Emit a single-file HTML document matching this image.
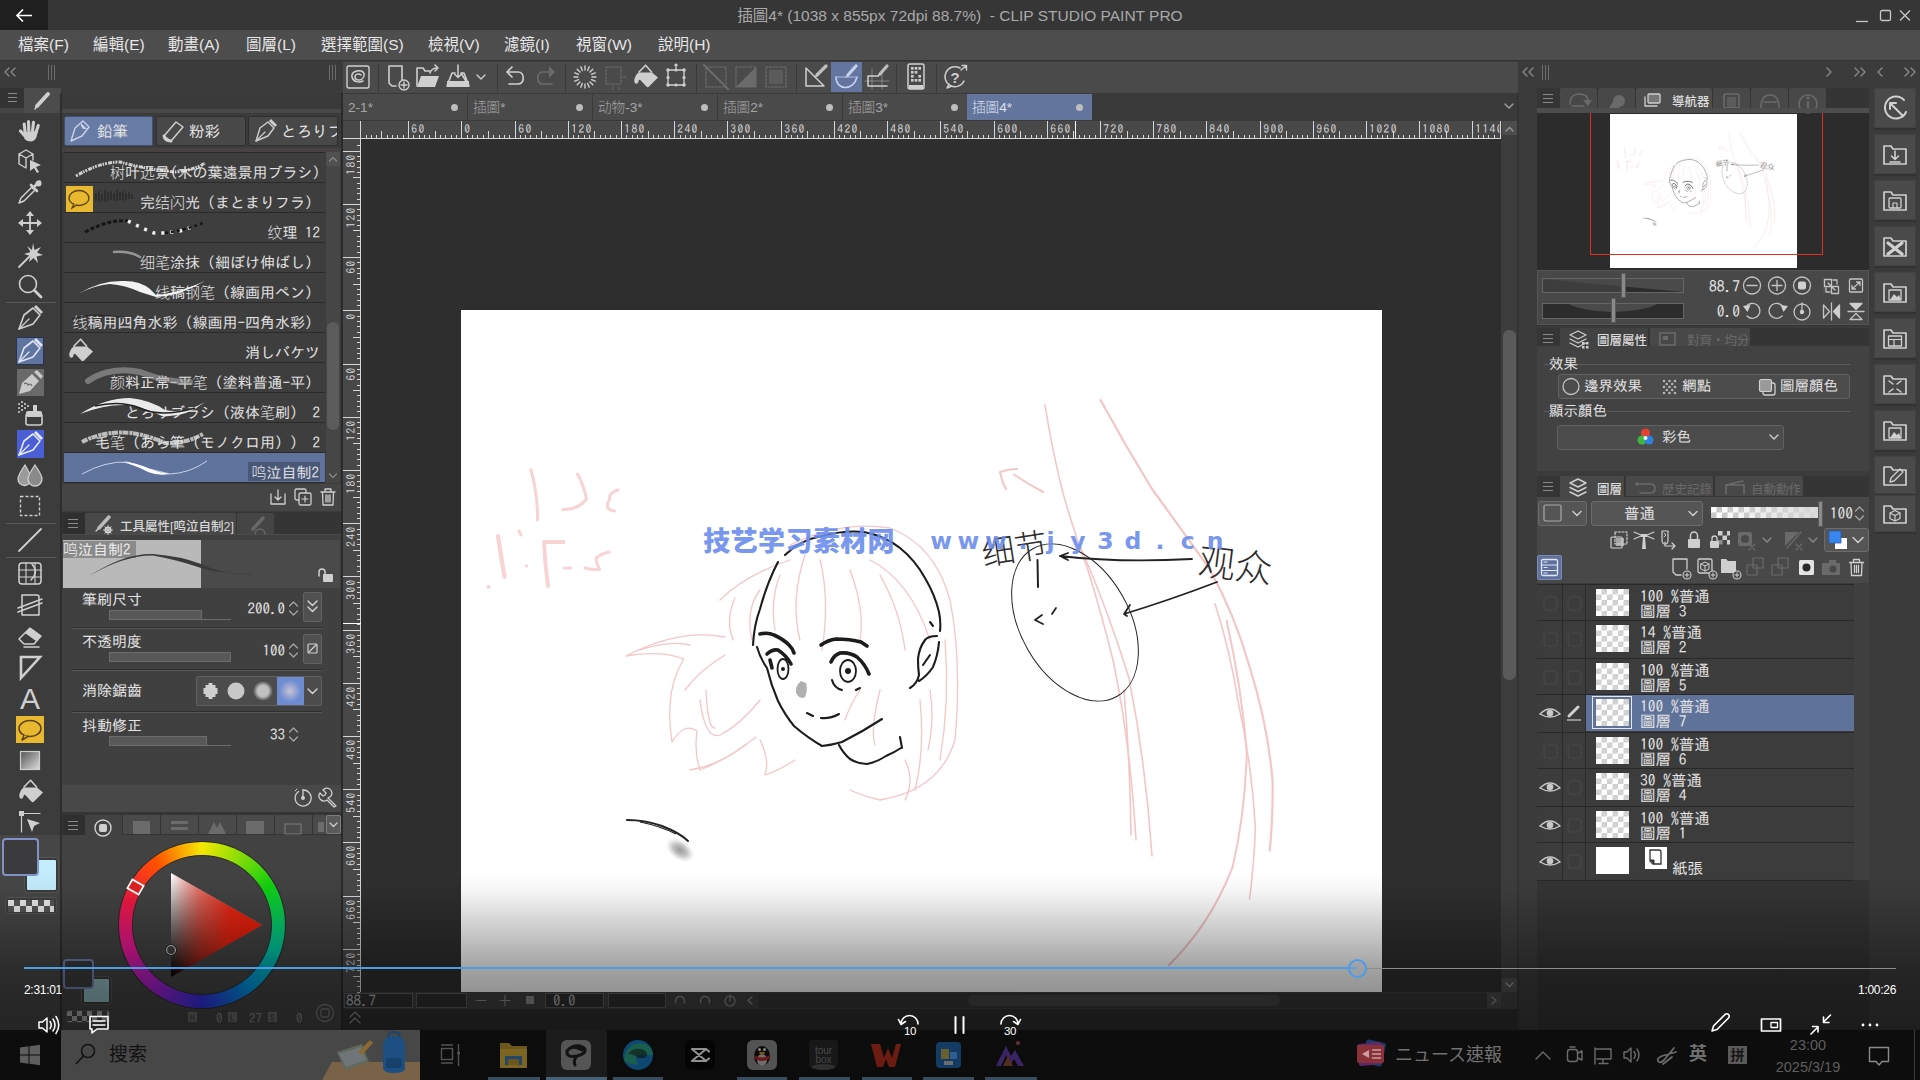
<!DOCTYPE html>
<html lang="zh-Hant">
<head>
<meta charset="utf-8">
<title>CLIP STUDIO PAINT PRO</title>
<style>
*{box-sizing:border-box;margin:0;padding:0}
html,body{width:1920px;height:1080px;overflow:hidden;background:#3c3c3c}
body{position:relative;font-family:"Liberation Sans","Noto Sans CJK TC","Noto Sans CJK SC",sans-serif;color:#d8d8d8;font-size:14px}
.a{position:absolute}
.g{font-family:"IPAGothic","Noto Sans CJK TC","Noto Sans CJK SC","Liberation Mono",monospace;font-weight:300}
svg{position:absolute;overflow:visible}
.ic{fill:none;stroke:#cfcfcf;stroke-width:1.6;stroke-linecap:round;stroke-linejoin:round}
.icf{fill:#cfcfcf;stroke:none}
.dim{opacity:.25}
/* ---- top ---- */
#title{left:0;top:0;width:1920px;height:30px;background:#363636}
#back{left:0;top:0;width:48px;height:31px;background:#1f1f1f}
#ttext{left:0;top:0;width:1920px;height:30px;line-height:31px;text-align:center;font-size:15.5px;color:#a9a9a9;white-space:pre}
#menu{left:0;top:30px;width:1920px;height:31px;background:#4d4d4d;border-bottom:1px solid #353535}
#menu span{position:absolute;top:0;line-height:30px;font-size:15.5px;color:#e6e6e6;white-space:nowrap}
#dockL{left:0;top:61px;width:342px;height:32px;background:#3b3b3b}
#cmd{left:343px;top:62px;width:1175px;height:31px;background:#4a4a4a}
#dockR{left:1518px;top:61px;width:402px;height:30px;background:#3b3b3b}
#tabbar{left:343px;top:93px;width:1175px;height:28px;background:#3a3a3a}
.tab{position:absolute;top:94px;height:26px;width:124px;background:#4a4a4a;color:#a6a6a6;font-size:13.6px;font-weight:300;line-height:27px;padding-left:5px}
.tab i{position:absolute;right:9.5px;top:9.5px;width:7px;height:7px;border-radius:50%;background:#bdbdbd}
.tab.sel{background:#63759d;color:#dfe3ee}
/* ---- canvas ---- */
#cv{left:361px;top:139px;width:1140px;height:853px;background:#2e2e2e}
#paper{left:461px;top:310px;width:921px;height:682px;background:#fff}
#rulh{left:343px;top:121px;width:1158px;height:18px;background:#484848}
#rulv{left:343px;top:139px;width:18px;height:853px;background:#484848}
#vsb{left:1501px;top:121px;width:17px;height:871px;background:#3d3d3d}
#stat{left:343px;top:992px;width:1175px;height:17px;background:#404040}
#below{left:343px;top:1009px;width:1175px;height:21px;background:#2f2f2f}
</style>
</head>
<body>
<div class="a" id="title"></div>
<div class="a" id="back"></div>
<svg style="left:15px;top:8px" width="18" height="15" viewBox="0 0 18 15"><path d="M17 7.5H2.5M8 1.5L2 7.5L8 13.5" fill="none" stroke="#fff" stroke-width="1.7"/></svg>
<div class="a" id="ttext">插圖4* (1038 x 855px 72dpi 88.7%)  - CLIP STUDIO PAINT PRO</div>
<svg style="left:1856px;top:9px" width="50" height="14" viewBox="0 0 50 14"><path d="M0 12.5H12" stroke="#c8c8c8" stroke-width="1.3" fill="none"/><rect x="24.5" y="1.5" width="10" height="10" rx="1.5" fill="none" stroke="#c8c8c8" stroke-width="1.3"/><path d="M44 1.5L54 11.5M54 1.5L44 11.5" stroke="#c8c8c8" stroke-width="1.3" fill="none"/></svg>
<div class="a" id="menu">
<span style="left:18px">檔案(F)</span><span style="left:93px">編輯(E)</span><span style="left:168px">動畫(A)</span><span style="left:246px">圖層(L)</span><span style="left:321px">選擇範圍(S)</span><span style="left:428px">檢視(V)</span><span style="left:504px">濾鏡(I)</span><span style="left:576px">視窗(W)</span><span style="left:658px">說明(H)</span>
</div>
<div class="a" id="dockL"></div>
<div class="a" id="cmd"></div>
<div class="a" id="dockR"></div>
<div class="a" id="tabbar"></div>
<div class="tab" style="left:343px">2-1*<i></i></div>
<div class="tab" style="left:468px">插圖*<i></i></div>
<div class="tab" style="left:593px">动物-3*<i></i></div>
<div class="tab" style="left:718px">插圖2*<i></i></div>
<div class="tab" style="left:843px">插圖3*<i></i></div>
<div class="tab sel" style="left:967px;width:125px">插圖4*<i></i></div>
<svg style="left:1503px;top:102px" width="12" height="8" viewBox="0 0 12 8"><path d="M2 2L6 6L10 2" class="ic" style="stroke:#999"/></svg>
<svg style="left:343px;top:62px" width="1175" height="31" viewBox="343 62 1175 31">
<g stroke="#393939" stroke-width="1" shape-rendering="crispEdges"><path d="M378.5 64V92M497.5 64V92M565.5 64V92M696.5 64V92M796.5 64V92M896.5 64V92M936.5 64V92"/></g>
<rect x="831" y="62" width="31" height="30" fill="#6476a0"/>
<!-- clip studio swirl -->
<g transform="translate(358 77)"><rect x="-11" y="-11" width="22" height="22" rx="2" class="ic" style="stroke-width:1.4"/><path d="M3-2c-2-2-6-1-6 2s4 4 7 2s3-7-1-8s-10 1-9 6s7 6 11 4" class="ic" style="stroke-width:1.5"/></g>
<!-- new -->
<g transform="translate(398 77)"><path d="M-9-11H4V4M-9-11V6L-6 9H-2" class="ic"/><circle cx="6" cy="8" r="5" fill="#4a4a4a" class="ic" style="stroke-width:1.4;fill:#4a4a4a"/><path d="M3 8H9M6 5V11" class="ic" style="stroke-width:1.4"/></g>
<!-- open -->
<g transform="translate(428 77)"><path d="M-11 9V-9H-5L-3-6H2" class="ic"/><path d="M-11 10L-7-1H11L7 10Z" class="icf"/><path d="M2-4C3-8 6-9 10-9M7-12L10-9L7-6" class="ic" style="stroke-width:1.5"/></g>
<!-- save -->
<g transform="translate(458 77)"><path d="M-11 9L-6-4H-3M3-4H6L11 9Z" class="ic"/><rect x="-11" y="4" width="22" height="6" class="icf"/><path d="M0-12V0M-3.5-3L0 0.5L3.5-3" class="ic" style="stroke-width:1.5"/></g>
<path d="M477 75L481 79L485 75" class="ic" style="stroke-width:1.4"/>
<!-- undo -->
<g transform="translate(516 77)"><path d="M-8-5H2C9-5 9 7 2 7H-7" class="ic" style="stroke-width:1.7"/><path d="M-4-10L-9-5L-4 0" class="ic" style="stroke-width:1.7"/></g>
<!-- redo dim -->
<g transform="translate(545 77)" class="dim"><path d="M8-5H-2C-9-5-9 7-2 7H7" class="ic" style="stroke-width:1.7"/><path d="M4-11L10-5L4 1Z" class="icf"/></g>
<!-- loading -->
<g transform="translate(585 77)" stroke="#cfcfcf" stroke-width="1.4" stroke-linecap="round"><path d="M0-11V-7M0 11V7M-11 0H-7M11 0H7M-7.8-7.8L-5-5M7.8 7.8L5 5M-7.8 7.8L-5 5M7.8-7.8L5-5M-4.2-10.2L-2.7-6.5M4.2 10.2L2.7 6.5M4.2-10.2L2.7-6.5M-4.2 10.2L-2.7 6.5M-10.2-4.2L-6.5-2.7M10.2 4.2L6.5 2.7M-10.2 4.2L-6.5 2.7M10.2-4.2L6.5-2.7"/></g>
<g transform="translate(615 77)" class="dim"><rect x="-9" y="-10" width="15" height="17" class="ic" style="stroke-dasharray:2 1.5;stroke-width:1.2"/><path d="M8 0H11M-2 10V12M4 10V12" class="ic" style="stroke-width:1"/></g>
<!-- fill bucket -->
<defs><g id="bkt"><path d="M-6.500-4.500H7L13 .500L3.800 9.800Q2.600 10.800 1.400 9.600L-4.500 3.200Q-6 2-6.400 4Q-6.800 7.200-9 6.800Q-11.200 6.200-10.600 2Q-10-2-6.500-4.500Z" fill="#cfcfcf"/><path d="M-6.500-4.500L.600-11.800L7-4.500" fill="none" stroke="#cfcfcf" stroke-width="1.600" stroke-linejoin="round"/></g></defs><use href="#bkt" transform="translate(645 77)"/>
<!-- transform -->
<g transform="translate(676 77)"><rect x="-8" y="-7" width="16" height="15" class="ic" style="stroke-width:1.4"/><g class="icf"><circle cx="-8" cy="-7" r="1.8"/><circle cx="8" cy="-7" r="1.8"/><circle cx="-8" cy="8" r="1.8"/><circle cx="8" cy="8" r="1.8"/><circle cx="0" cy="8" r="1.6"/><circle cx="-8" cy="0.5" r="1.6"/><circle cx="8" cy="0.5" r="1.6"/><circle cx="0" cy="-7" r="1.6"/><circle cx="0" cy="-12" r="1.6"/></g><path d="M0-12V-7" class="ic" style="stroke-width:1.2"/></g>
<!-- dim three -->
<g transform="translate(716 77)" class="dim"><rect x="-10" y="-10" width="20" height="20" class="ic" style="stroke-dasharray:2 1.5;stroke-width:1.2"/><path d="M-12-12L12 12" class="ic" style="stroke-width:2"/></g>
<g transform="translate(746 77)" class="dim"><rect x="-10" y="-10" width="20" height="20" class="ic" style="stroke-dasharray:2 1.5;stroke-width:1.2"/><path d="M10-10V10H-10Z" class="icf"/></g>
<g transform="translate(776 77)" class="dim"><rect x="-10" y="-10" width="20" height="20" class="ic" style="stroke-dasharray:2 1.5;stroke-width:1.2"/><rect x="-7" y="-7" width="14" height="14" class="icf" opacity=".5"/></g>
<!-- ruler snap icons -->
<g transform="translate(815 77)"><path d="M-9-9V9H9Z" class="ic" style="stroke-width:1.5"/><path d="M2-2L11-11" class="ic" style="stroke-width:3.2;stroke:#bdbdbd"/><path d="M0 0L2-2" class="ic" style="stroke-width:1.2"/></g>
<g transform="translate(846 77)"><path d="M-10 0C-10 14 8 14 11 0" class="ic" style="stroke:#c7d3f5;stroke-width:1.5"/><path d="M-10 0H11" class="ic" style="stroke:#aebbe0;stroke-width:1"/><path d="M2-2L10-11" class="ic" style="stroke-width:3.2;stroke:#c7d0ea"/><path d="M0 0L2-2" class="ic" style="stroke-width:1.2;stroke:#c7d0ea"/></g>
<g transform="translate(877 77)"><path d="M-9-1V9H10M-9-1H1" class="ic" style="stroke-width:1.5"/><path d="M-12 4H12M5-6V12M-5-8V12" class="ic" style="stroke-width:.7;opacity:.6"/><path d="M3-3L10-11" class="ic" style="stroke-width:3.2;stroke:#bdbdbd"/><path d="M1-1L3-3" class="ic" style="stroke-width:1.2"/></g>
<!-- phone -->
<g transform="translate(916 77)"><rect x="-8" y="-13" width="16" height="25" rx="2" class="ic" style="stroke-width:1.5"/><rect x="-7" y="8" width="14" height="4" class="icf"/><g class="icf"><rect x="-5" y="-10" width="2.6" height="2.6"/><rect x="-1.3" y="-10" width="2.6" height="2.6"/><rect x="2.4" y="-10" width="2.6" height="2.6"/><rect x="-5" y="-6" width="2.6" height="2.6"/><rect x="-1.3" y="-6" width="2.6" height="2.6"/><rect x="-5" y="-2" width="2.6" height="2.6"/><rect x="2.4" y="-2" width="2.6" height="2.6"/><rect x="-5" y="2" width="2.6" height="2.6"/><rect x="-1.3" y="2" width="2.6" height="2.6"/><rect x="2.4" y="2" width="2.6" height="2.6"/></g></g>
<!-- help -->
<g transform="translate(956 77)"><path d="M4-9A10 10 0 1 0 8 4M-7 7L-9 11L-4 9" class="ic" style="stroke-width:1.5"/><path d="M5-7L10-11M6-11.500H10.500V-7" class="ic" style="stroke-width:1.4"/><text x="-1" y="5.500" font-family="Liberation Sans,sans-serif" font-weight="bold" font-size="15" fill="#cfcfcf" text-anchor="middle">?</text></g>
</svg>
<!-- dock grips -->
<svg style="left:0;top:61px" width="343" height="32" viewBox="0 61 343 32"><g class="ic" style="stroke:#8a8a8a;stroke-width:1.3"><path d="M9 68L5 72L9 76M15 68L11 72L15 76"/></g><g stroke="#6c6c6c" stroke-width="1"><path d="M48.500 65V80M51.500 65V80M54.500 65V80M329.500 65V80M332.500 65V80M335.500 65V80"/></g></svg>
<svg style="left:1518px;top:61px" width="402" height="30" viewBox="1518 61 402 30"><g class="ic" style="stroke:#8a8a8a;stroke-width:1.3"><path d="M1527 68L1523 72L1527 76M1533 68L1529 72L1533 76M1827 68L1831 72L1827 76M1855 68L1859 72L1855 76M1861 68L1865 72L1861 76M1882 68L1878 72L1882 76M1905 68L1909 72L1905 76M1911 68L1915 72L1911 76"/></g><g stroke="#6c6c6c" stroke-width="1"><path d="M1542.500 65V80M1545.500 65V80M1548.500 65V80"/></g></svg>
<div class="a" id="cv"></div>
<div class="a" id="paper"></div>
<div class="a" id="rulh"></div>
<div class="a" id="rulv"></div>
<div class="a" id="vsb"></div>
<div class="a" id="stat"></div>
<div class="a" id="below"></div>
<svg style="left:343px;top:121px;overflow:hidden" width="1158" height="18" viewBox="343 121 1158 18"><g stroke="#d6d6d6" stroke-width="1" shape-rendering="crispEdges">
<path d="M360.5 121V139M343 138.5H1501" fill="none"/>
<path d="M366.5 135V138M371.5 135V138M376.5 135V138M381.5 131V138M387.5 135V138M392.5 135V138M397.5 135V138M403.5 135V138M408.5 121V138M413.5 135V138M419.5 135V138M424.5 135V138M429.5 135V138M435.5 131V138M440.5 135V138M445.5 135V138M451.5 135V138M456.5 135V138M461.5 121V138M467.5 135V138M472.5 135V138M477.5 135V138M483.5 135V138M488.5 131V138M493.5 135V138M499.5 135V138M504.5 135V138M509.5 135V138M515.5 121V138M520.5 135V138M525.5 135V138M530.5 135V138M536.5 135V138M541.5 131V138M546.5 135V138M552.5 135V138M557.5 135V138M562.5 135V138M568.5 121V138M573.5 135V138M578.5 135V138M584.5 135V138M589.5 135V138M594.5 131V138M600.5 135V138M605.5 135V138M610.5 135V138M616.5 135V138M621.5 121V138M626.5 135V138M632.5 135V138M637.5 135V138M642.5 135V138M648.5 131V138M653.5 135V138M658.5 135V138M664.5 135V138M669.5 135V138M674.5 121V138M680.5 135V138M685.5 135V138M690.5 135V138M695.5 135V138M701.5 131V138M706.5 135V138M711.5 135V138M717.5 135V138M722.5 135V138M727.5 121V138M733.5 135V138M738.5 135V138M743.5 135V138M749.5 135V138M754.5 131V138M759.5 135V138M765.5 135V138M770.5 135V138M775.5 135V138M781.5 121V138M786.5 135V138M791.5 135V138M797.5 135V138M802.5 135V138M807.5 131V138M813.5 135V138M818.5 135V138M823.5 135V138M829.5 135V138M834.5 121V138M839.5 135V138M844.5 135V138M850.5 135V138M855.5 135V138M860.5 131V138M866.5 135V138M871.5 135V138M876.5 135V138M882.5 135V138M887.5 121V138M892.5 135V138M898.5 135V138M903.5 135V138M908.5 135V138M914.5 131V138M919.5 135V138M924.5 135V138M930.5 135V138M935.5 135V138M940.5 121V138M946.5 135V138M951.5 135V138M956.5 135V138M962.5 135V138M967.5 131V138M972.5 135V138M978.5 135V138M983.5 135V138M988.5 135V138M994.5 121V138M999.5 135V138M1004.5 135V138M1009.5 135V138M1015.5 135V138M1020.5 131V138M1025.5 135V138M1031.5 135V138M1036.5 135V138M1041.5 135V138M1047.5 121V138M1052.5 135V138M1057.5 135V138M1063.5 135V138M1068.5 135V138M1073.5 131V138M1079.5 135V138M1084.5 135V138M1089.5 135V138M1095.5 135V138M1100.5 121V138M1105.5 135V138M1111.5 135V138M1116.5 135V138M1121.5 135V138M1127.5 131V138M1132.5 135V138M1137.5 135V138M1143.5 135V138M1148.5 135V138M1153.5 121V138M1158.5 135V138M1164.5 135V138M1169.5 135V138M1174.5 135V138M1180.5 131V138M1185.5 135V138M1190.5 135V138M1196.5 135V138M1201.5 135V138M1206.5 121V138M1212.5 135V138M1217.5 135V138M1222.5 135V138M1228.5 135V138M1233.5 131V138M1238.5 135V138M1244.5 135V138M1249.5 135V138M1254.5 135V138M1260.5 121V138M1265.5 135V138M1270.5 135V138M1276.5 135V138M1281.5 135V138M1286.5 131V138M1292.5 135V138M1297.5 135V138M1302.5 135V138M1307.5 135V138M1313.5 121V138M1318.5 135V138M1323.5 135V138M1329.5 135V138M1334.5 135V138M1339.5 131V138M1345.5 135V138M1350.5 135V138M1355.5 135V138M1361.5 135V138M1366.5 121V138M1371.5 135V138M1377.5 135V138M1382.5 135V138M1387.5 135V138M1393.5 131V138M1398.5 135V138M1403.5 135V138M1409.5 135V138M1414.5 135V138M1419.5 121V138M1425.5 135V138M1430.5 135V138M1435.5 135V138M1441.5 135V138M1446.5 131V138M1451.5 135V138M1457.5 135V138M1462.5 135V138M1467.5 135V138M1472.5 121V138M1478.5 135V138M1483.5 135V138M1488.5 135V138M1494.5 135V138" fill="none"/>
<path d="M1500.5 121V139" fill="none"/>
<path d="M1075.5 121V139" stroke="#fff" stroke-width="1.5"/>
</g><clipPath id="rhc"><rect x="361" y="121" width="1138.5" height="18"/></clipPath><g clip-path="url(#rhc)" font-family="IPAGothic,'Liberation Mono',monospace" font-size="11.5" fill="#d6d6d6" letter-spacing="1.45">
<text x="411.2" y="132.6">60</text>
<text x="464.2" y="132.6">0</text>
<text x="518.2" y="132.6">60</text>
<text x="571.2" y="132.6">120</text>
<text x="624.2" y="132.6">180</text>
<text x="677.2" y="132.6">240</text>
<text x="730.2" y="132.6">300</text>
<text x="784.2" y="132.6">360</text>
<text x="837.2" y="132.6">420</text>
<text x="890.2" y="132.6">480</text>
<text x="943.2" y="132.6">540</text>
<text x="997.2" y="132.6">600</text>
<text x="1050.2" y="132.6">660</text>
<text x="1103.2" y="132.6">720</text>
<text x="1156.2" y="132.6">780</text>
<text x="1209.2" y="132.6">840</text>
<text x="1263.2" y="132.6">900</text>
<text x="1316.2" y="132.6">960</text>
<text x="1369.2" y="132.6">1020</text>
<text x="1422.2" y="132.6">1080</text>
<text x="1475.2" y="132.6">1140</text>
</g></svg>
<svg style="left:343px;top:139px" width="18" height="853" viewBox="343 139 18 853"><g stroke="#d6d6d6" stroke-width="1" shape-rendering="crispEdges">
<path d="M357 145.5H360M343 151.5H360M357 156.5H360M357 161.5H360M357 167.5H360M357 172.5H360M353 177.5H360M357 183.5H360M357 188.5H360M357 193.5H360M357 199.5H360M343 204.5H360M357 209.5H360M357 215.5H360M357 220.5H360M357 225.5H360M353 230.5H360M357 236.5H360M357 241.5H360M357 246.5H360M357 252.5H360M343 257.5H360M357 262.5H360M357 268.5H360M357 273.5H360M357 278.5H360M353 284.5H360M357 289.5H360M357 294.5H360M357 300.5H360M357 305.5H360M343 310.5H360M357 316.5H360M357 321.5H360M357 326.5H360M357 332.5H360M353 337.5H360M357 342.5H360M357 348.5H360M357 353.5H360M357 358.5H360M343 364.5H360M357 369.5H360M357 374.5H360M357 379.5H360M357 385.5H360M353 390.5H360M357 395.5H360M357 401.5H360M357 406.5H360M357 411.5H360M343 417.5H360M357 422.5H360M357 427.5H360M357 433.5H360M357 438.5H360M353 443.5H360M357 449.5H360M357 454.5H360M357 459.5H360M357 465.5H360M343 470.5H360M357 475.5H360M357 481.5H360M357 486.5H360M357 491.5H360M353 497.5H360M357 502.5H360M357 507.5H360M357 513.5H360M357 518.5H360M343 523.5H360M357 529.5H360M357 534.5H360M357 539.5H360M357 544.5H360M353 550.5H360M357 555.5H360M357 560.5H360M357 566.5H360M357 571.5H360M343 576.5H360M357 582.5H360M357 587.5H360M357 592.5H360M357 598.5H360M353 603.5H360M357 608.5H360M357 614.5H360M357 619.5H360M357 624.5H360M343 630.5H360M357 635.5H360M357 640.5H360M357 646.5H360M357 651.5H360M353 656.5H360M357 662.5H360M357 667.5H360M357 672.5H360M357 678.5H360M343 683.5H360M357 688.5H360M357 693.5H360M357 699.5H360M357 704.5H360M353 709.5H360M357 715.5H360M357 720.5H360M357 725.5H360M357 731.5H360M343 736.5H360M357 741.5H360M357 747.5H360M357 752.5H360M357 757.5H360M353 763.5H360M357 768.5H360M357 773.5H360M357 779.5H360M357 784.5H360M343 789.5H360M357 795.5H360M357 800.5H360M357 805.5H360M357 811.5H360M353 816.5H360M357 821.5H360M357 827.5H360M357 832.5H360M357 837.5H360M343 842.5H360M357 848.5H360M357 853.5H360M357 858.5H360M357 864.5H360M353 869.5H360M357 874.5H360M357 880.5H360M357 885.5H360M357 890.5H360M343 896.5H360M357 901.5H360M357 906.5H360M357 912.5H360M357 917.5H360M353 922.5H360M357 928.5H360M357 933.5H360M357 938.5H360M357 944.5H360M343 949.5H360M357 954.5H360M357 960.5H360M357 965.5H360M357 970.5H360M353 976.5H360M357 981.5H360M357 986.5H360M357 992.5H360" fill="none"/>
<path d="M360.5 139V992" fill="none"/>
<path d="M343 623.5H361" stroke="#fff" stroke-width="1.5"/>
</g><g font-family="IPAGothic,'Liberation Mono',monospace" font-size="11.5" fill="#d6d6d6" letter-spacing="1.45" text-anchor="end">
<text transform="translate(354.6 153.2) rotate(-90)" x="0" y="0">180</text>
<text transform="translate(354.6 206.2) rotate(-90)" x="0" y="0">120</text>
<text transform="translate(354.6 259.2) rotate(-90)" x="0" y="0">60</text>
<text transform="translate(354.6 312.2) rotate(-90)" x="0" y="0">0</text>
<text transform="translate(354.6 366.2) rotate(-90)" x="0" y="0">60</text>
<text transform="translate(354.6 419.2) rotate(-90)" x="0" y="0">120</text>
<text transform="translate(354.6 472.2) rotate(-90)" x="0" y="0">180</text>
<text transform="translate(354.6 525.2) rotate(-90)" x="0" y="0">240</text>
<text transform="translate(354.6 578.2) rotate(-90)" x="0" y="0">300</text>
<text transform="translate(354.6 632.2) rotate(-90)" x="0" y="0">360</text>
<text transform="translate(354.6 685.2) rotate(-90)" x="0" y="0">420</text>
<text transform="translate(354.6 738.2) rotate(-90)" x="0" y="0">480</text>
<text transform="translate(354.6 791.2) rotate(-90)" x="0" y="0">540</text>
<text transform="translate(354.6 844.2) rotate(-90)" x="0" y="0">600</text>
<text transform="translate(354.6 898.2) rotate(-90)" x="0" y="0">660</text>
<text transform="translate(354.6 951.2) rotate(-90)" x="0" y="0">720</text>
</g></svg>
<svg style="left:0;top:0" width="1920" height="1080" viewBox="0 0 1920 1080">
<defs><clipPath id="pc"><rect x="461" y="310" width="921" height="682"/></clipPath>
<radialGradient id="smg"><stop offset="0" stop-color="#9a9a9a"/><stop offset=".5" stop-color="#c4c4c4"/><stop offset="1" stop-color="#ddd" stop-opacity="0"/></radialGradient>
<g id="art">
<!-- pink sketch -->
<g fill="none" stroke="#f4c6c6" stroke-width="1.300" stroke-linecap="round" stroke-linejoin="round">
<path d="M725 637Q680 628 626 656Q660 650 684 659Q664 690 672 742Q684 722 697 731Q694 752 700 770Q730 758 756 737"/>
<path d="M720 600Q745 575 790 560M735 598Q725 620 733 640M760 590Q745 610 752 640M700 700Q705 740 720 735Q740 725 760 700"/>
<path d="M685 690Q700 670 725 655M706 690Q708 730 715 728M640 650Q670 640 690 645"/>
<path d="M805 555Q790 600 800 640M820 560Q830 600 822 650M850 570Q865 610 860 640M880 575Q900 610 905 650M870 560Q910 580 930 640M780 575Q770 600 775 630"/>
<path d="M790 545Q840 520 890 528Q935 545 950 600Q962 660 955 740Q940 790 880 800Q860 795 850 790"/>
<path d="M860 690Q850 705 845 720M880 690Q870 730 875 745M905 760Q915 780 905 800M920 700Q925 750 915 790M760 740Q770 760 765 775Q780 770 795 760M690 770Q720 765 745 745"/>
<path d="M945 640Q950 700 940 760M930 690Q935 720 928 750"/>
<!-- right long lines -->
<path d="M1045 405Q1052 450 1063 493Q1075 535 1087 567Q1102 615 1113 660Q1130 740 1136 840" stroke-width="1.600"/>
<path d="M1100.500 400Q1125 445 1152 489Q1182 530 1209.500 569Q1235 615 1249.600 667Q1268 725 1272.600 781.600Q1273 820 1269.700 850.500" stroke-width="2.200"/>
<path d="M1226.700 621Q1242 690 1246.800 753Q1245 815 1232.400 867.700Q1210 925 1169 965" stroke-width="2"/>
<path d="M1215 603.700Q1230 650 1238 701Q1252 765 1255.400 827.500Q1254 865 1249.600 899M1080 546Q1108 610 1129 678Q1146 765 1152 856M1124 690Q1130 760 1131 835" stroke-width="1.600"/>
<path d="M1000 472Q1008 469 1017 469M1000 472Q1002 482 1006 489M1014 474.500Q1028 484 1043 492" stroke-width="2"/>
<!-- left scribbles -->
</g><g fill="none" stroke="#f7d3d3" stroke-width="3" stroke-linecap="round" stroke-linejoin="round">
<path d="M531 470Q538 495 537.500 520M577.500 474Q584 486 586.500 499Q578 510 563 509.500M618 490Q608 493 610 499Q606 504 608 508Q611 511 614.500 511" stroke-width="3"/>
<path d="M498 536Q501 556 504.500 577" stroke-width="4.200"/><path d="M544 542H563.500M544 542Q545 565 548 586" stroke-width="3.800"/>
<path d="M519 531L521 535M564.500 568H571M609 552Q600 554 596 558.500Q597 565 599.500 569.500Q592 570 585 568" stroke-width="3"/>
<circle cx="526.500" cy="566" r="1.600" fill="#f7d3d3" stroke="none"/><circle cx="488.500" cy="587" r="2" fill="#f7d3d3" stroke="none"/>
</g>
<!-- black linework -->
<g fill="none" stroke="#1c1c1c" stroke-width="2.100" stroke-linecap="round" stroke-linejoin="round">
<path d="M753 645Q754 625 760 609Q767 583 778 562M785 555Q800 540 822 536Q845 530 864 532Q885 536 900 548Q915 560 925 578Q935 595 939 612Q941 622 940 631"/>
<path d="M930 622L933 626M937 636Q928 636 925 640Q919 648 918 659Q918 668 919 675Q917 684 910 688M939 642Q938 655 933 667Q927 676 919 681M923 665L930 655"/>
<path d="M757 647Q760 658 767 668Q771 685 778 701Q785 715 794 726Q808 738 822 746Q832 745 842 742Q862 732 882 719"/>
<path d="M839 745Q843 753 850 759Q858 764 867 764Q877 762 886 756Q895 752 901 748M900 737L902 748"/>
<path d="M807 713L813 716M821 718Q830 719 839 714"/>
<ellipse cx="783" cy="669" rx="5.500" ry="10" stroke-width="1.800"/><ellipse cx="848" cy="671" rx="8" ry="11" stroke-width="1.800"/>
<path d="M832 680Q834 688 842 690M856 690L860 688"/>
</g>
<g fill="none" stroke="#1c1c1c" stroke-width="3.600" stroke-linecap="round" stroke-linejoin="round">
<path d="M760 634Q768 632 774 635Q783 639 789 645Q793 649 794 653"/>
<path d="M821 645Q828 640 836 639Q850 639 861 642L867 646"/>
<path d="M767 654Q772 649 778 650Q786 655 791 664M770 660L772 668"/>
<path d="M831 662Q834 655 840 653Q850 652 857 657Q865 664 869 674"/>
</g>
<circle cx="783" cy="669" r="2" fill="#1c1c1c"/><circle cx="848" cy="671" r="3" fill="#1c1c1c"/>
<path d="M801 681Q795 686 796 693Q800 700 805 697Q808 690 806 683Z" fill="#b0b0b0"/>
<!-- ellipse + notes -->
<ellipse cx="1075" cy="622.500" rx="85" ry="54.400" transform="rotate(60.200 1075 622.500)" fill="none" stroke="#222" stroke-width="1"/>
<g fill="none" stroke="#222" stroke-width="1.800" stroke-linecap="round" stroke-linejoin="round">
<path d="M1037.500 560L1038 587" stroke-width="2"/>
<path d="M1060 556Q1120 563 1192 559M1060 556L1068 553M1060 556L1068 560"/>
<path d="M1217 582Q1170 600 1124 614M1124 614L1130 605M1124 614L1127 616"/>
<path d="M1035 620L1043 624M1035 620L1042 615M1052 614L1056 608"/>
</g>
<g font-family="'Liberation Sans','Noto Sans CJK SC',sans-serif" font-weight="300" fill="#2c2c2c"><text transform="translate(984 566) rotate(-9)" font-size="33">细节</text><text transform="translate(1197 574) rotate(7)" font-size="37">观众</text></g>
<path d="M627 820Q645 820 662 826Q680 833 688 841" fill="none" stroke="#222" stroke-width="2" stroke-linecap="round"/>
<path d="M640 822Q660 826 676 834" fill="none" stroke="#222" stroke-width="1.200"/>
<ellipse cx="680" cy="850" rx="16" ry="10" transform="rotate(35 680 850)" fill="url(#smg)"/>
</g></defs>
<g clip-path="url(#pc)"><use href="#art"/></g>
<!-- watermark -->
<g fill="#6a8cec" opacity=".9" text-anchor="middle">
<text y="550.500" font-family="'Liberation Sans','Noto Sans CJK SC',sans-serif" font-weight="900" font-size="27" x="716.700 744.100 771.500 798.900 826.300 853.700 881.100">技艺学习素材网</text>
<text y="549" font-family="'DejaVu Sans','Liberation Sans',sans-serif" font-weight="bold" font-size="23.500" x="941 968.400 995.800 1023 1050.600 1078 1105.400 1132.800 1160 1187.600 1215">www.jy3d.cn</text>
</g>
</svg>
<!-- vertical scrollbar -->
<div class="a" style="left:1502px;top:121px;width:15px;height:14px;background:#4d4d4d"></div>
<div class="a" style="left:1503px;top:330px;width:13px;height:350px;background:#5a5a5a;border-radius:6px"></div>
<div class="a" style="left:1502px;top:978px;width:15px;height:14px;background:#4d4d4d"></div>
<!-- status bar content -->
<div class="a" style="left:344px;top:993px;width:69px;height:15px;background:#2f2f2f;border:1px solid #5c5c5c"></div>
<div class="a" style="left:416px;top:993px;width:51px;height:15px;background:#2f2f2f;border:1px solid #5c5c5c"></div>
<div class="a" style="left:545px;top:993px;width:59px;height:15px;background:#2f2f2f;border:1px solid #5c5c5c"></div>
<div class="a" style="left:608px;top:993px;width:58px;height:15px;background:#2f2f2f;border:1px solid #5c5c5c"></div>
<div class="a g" style="left:346px;top:993px;font-size:15px;line-height:16px;color:#b4b4b4">88.7</div>
<div class="a g" style="left:553px;top:993px;font-size:15px;line-height:16px;color:#b4b4b4">0.0</div>
<div class="a" style="left:759px;top:993px;width:742px;height:15px;background:#353535"></div>
<div class="a" style="left:968px;top:995px;width:312px;height:11px;background:#454545;border-radius:5px"></div>
<div class="a" style="left:1487px;top:993px;width:14px;height:15px;background:#4a4a4a"></div>
<svg style="left:343px;top:121px" width="1175" height="910" viewBox="343 121 1175 910">
<path d="M1506 131L1509.500 127.500L1513 131M1506 983L1509.500 986.500L1513 983" class="ic" style="stroke:#999;stroke-width:1.300"/>
<g class="ic" style="stroke:#8c8c8c;stroke-width:1.200"><path d="M476 1000.500H486M500 1000.500H510M505 995.500V1005.500"/><path d="M676 1003A4.500 4.500 0 1 1 684 1003M701 1003A4.500 4.500 0 1 1 709 1003"/><circle cx="730" cy="1001" r="5"/><path d="M730 995V1001M752 997L748 1000.500L752 1004M1492 997L1496 1000.500L1492 1004"/><path d="M350 1017L355 1012L360 1017M350 1023L355 1018L360 1023"/></g>
<rect x="526" y="996" width="8" height="8" fill="#8c8c8c"/>
</svg>
<div class="a" style="left:0;top:93px;width:61px;height:937px;background:#3c3c3c"></div>
<div class="a" style="left:0;top:88px;width:61px;height:25px;background:#454545"></div><div class="a" style="left:0;top:88px;width:24px;height:20px;background:#333"></div>
<div class="a" style="left:24px;top:88px;width:37px;height:25px;background:#4c4c4c"></div>
<div class="a" style="left:0;top:835px;width:61px;height:195px;background:#464646"></div>
<div class="a" style="left:60px;top:93px;width:2px;height:937px;background:#2e2e2e"></div>
<div class="a" style="left:16px;top:337px;width:28px;height:28px;background:#6074a0;border:1px solid #2a3350"></div>
<div class="a" style="left:17px;top:369px;width:27px;height:27px;background:#6a6a6a"></div>
<div class="a" style="left:17px;top:430px;width:27px;height:28px;background:#4a5fd6"></div>
<div class="a" style="left:16px;top:716px;width:28px;height:27px;background:#e8b830"></div>
<svg style="left:0;top:88px" width="61" height="830" viewBox="0 88 61 830">
<g stroke="#8a8a8a" stroke-width="1"><path d="M8 93.500H17M8 97.500H17M8 101.500H17"/></g>
<g stroke="#5a5a5a" stroke-width="1"><path d="M6 302.500H56M6 523.500H56M6 557.500H56"/></g>
<!-- header pen -->
<path d="M48 94L37 106" class="ic" style="stroke-width:4"/><path d="M35 109L37 106" class="ic" style="stroke-width:1.500"/>
<!-- hand -->
<g transform="translate(30 131)"><path d="M-6.500 1L-5.500 8Q-3 10.500 1 10.500Q5 10 6.500 6L8 0Z" class="icf"/><g class="ic" style="stroke-width:3.100"><path d="M-4.800 2L-5.800-7M-1.200 0L-1.500-9.500M2.500 0L3.500-8.800M5.800 2L8.300-5.500"/><path d="M-5 5L-9.500 0" style="stroke-width:3.300"/></g></g>
<!-- 3d cube + cursor -->
<g transform="translate(30 161)"><path d="M-11-7L-4-11L3-7V-1M-11-7V3L-4 7V-3L-11-7M-4-3L3-7" class="ic" style="stroke-width:1.400"/><path d="M0-1L11 4L6 6L9 11L7 12L4 7L0 10Z" class="icf"/></g>
<!-- eyedropper -->
<g transform="translate(30 192)"><path d="M-11 11L-9 6L2-5L5-2L-6 9Z" class="ic" style="stroke-width:1.500"/><path d="M1-7L7-1M3-4L8-9Q11-12 9-9" class="ic" style="stroke-width:2.600"/><circle cx="8.500" cy="-8.500" r="3" class="icf"/></g>
<!-- move -->
<g transform="translate(30 223)"><path d="M-8 0H8M0-8V8" class="ic" style="stroke-width:1.800"/><path d="M-12 0L-7-4V4ZM12 0L7-4V4ZM0-12L-4-7H4ZM0 12L-4 7H4Z" class="icf"/></g>
<!-- wand -->
<g transform="translate(30 255)"><path d="M-11 12L0 1" class="ic" style="stroke-width:1.800"/><path d="M3-12L4.500-5L11-8L7-2.500L13 0L6.500 1.500L8 8L3.500 3L-1 7L.500 1L-6-1L.500-3L-3-9L2-5Z" class="icf"/></g>
<!-- zoom -->
<g transform="translate(30 286)"><circle cx="-2" cy="-2" r="8.500" class="ic" style="stroke-width:1.600"/><path d="M4.500 4.500L11 11" class="ic" style="stroke-width:2.800"/></g>
<!-- pen nib generic -->
<g id="nibA" transform="translate(30 318)"><path d="M-11 11L-6-3L3-10L10-3L3 6Z" class="ic" style="stroke-width:1.600"/><path d="M-11 11L-1 1" class="ic" style="stroke-width:1.200"/><path d="M4-11L11-4L13-6L6-13Z" class="icf"/></g>
<g transform="translate(30 351)"><path d="M-11 11L-6-3L3-10L10-3L3 6Z" class="ic" style="stroke-width:1.600;stroke:#dfe5f5"/><path d="M-11 11L-1 1" class="ic" style="stroke-width:1.200;stroke:#dfe5f5"/><path d="M4-11L11-4L13-6L6-13Z" fill="#dfe5f5"/></g>
<!-- pencil -->
<g transform="translate(30 383)"><path d="M-11 11L-8 0L2-9L9-2L0 8Z" fill="#c9c9c9"/><path d="M-6 1Q-3-1-2 2Q1 0 2 3" fill="none" stroke="#6a6a6a" stroke-width="1.200"/><path d="M4-11L11-4L13-7L7-13Z" fill="#c9c9c9"/></g>
<!-- airbrush -->
<g transform="translate(30 413)"><rect x="-4" y="1" width="16" height="11" rx="2" class="ic" style="stroke-width:1.600"/><rect x="-4" y="-2" width="16" height="6" rx="2" class="icf"/><rect x="3" y="-8" width="4" height="6" class="icf"/><g class="icf"><circle cx="-2" cy="-7" r="1.100"/><circle cx="-5" cy="-9" r="1.100"/><circle cx="-5" cy="-5" r="1.100"/><circle cx="-8" cy="-11" r="1.100"/><circle cx="-8" cy="-7" r="1.100"/><circle cx="-8" cy="-3" r="1.100"/><circle cx="-11" cy="-9" r="1"/><circle cx="-11" cy="-5" r="1"/><circle cx="-11" cy="-1" r="1"/></g></g>
<g transform="translate(30 444)"><path d="M-11 11L-6-3L3-10L10-3L3 6Z" class="ic" style="stroke-width:1.600;stroke:#e6eaff"/><path d="M-11 11L-1 1" class="ic" style="stroke-width:1.200;stroke:#e6eaff"/><path d="M4-11L11-4L13-6L6-13Z" fill="#e6eaff"/></g>
<!-- blend drops -->
<g transform="translate(30 475)"><path d="M-5-10Q-12 0-12 4A6.500 6.500 0 0 0 1 4Q1 0-5-10Z" fill="#9a9a9a" stroke="#cfcfcf" stroke-width="1.300"/><path d="M5-10Q-2 0-2 4A6.500 6.500 0 0 0 12 4Q12 0 5-10Z" fill="#8a8a8a" stroke="#cfcfcf" stroke-width="1.300"/></g>
<!-- selection -->
<rect x="20.500" y="496.500" width="19" height="19" class="ic" style="stroke-width:1.400;stroke-dasharray:3 2;stroke-linecap:butt"/>
<!-- line -->
<path d="M19 551L41 529" class="ic" style="stroke-width:1.800"/>
<!-- frame -->
<g transform="translate(30 573)"><rect x="-11" y="-10" width="22" height="21" rx="3" class="ic" style="stroke-width:1.500"/><path d="M-11-3H11M-11 4H11M-4-10V11M5-10V11" class="ic" style="stroke-width:1.100"/><path d="M2-9Q9-1 1 7" class="ic" style="stroke-width:1.500"/></g>
<!-- ruler -->
<g transform="translate(30 605)"><path d="M-8-10H7Q9-10 9-8V10H-8Z" class="ic" style="stroke-width:1.500"/><path d="M-12 3L12-6M-12 7L12-2" class="ic" style="stroke-width:1.500"/></g>
<!-- eraser -->
<g transform="translate(30 637)"><path d="M-11 2L0-9L11-1L4 7H-6Z" class="ic" style="stroke-width:1.500"/><path d="M-5-4L0-9L11-1L6 4Z" class="icf"/><path d="M-6 10H9" class="ic" style="stroke-width:1.500"/></g>
<!-- triangle -->
<path d="M21 657H40L21 678Z" class="ic" style="stroke-width:2.600;stroke-linejoin:miter"/>
<!-- A -->
<text x="30" y="709" font-family="Liberation Sans,sans-serif" font-size="30" fill="#cfcfcf" text-anchor="middle">A</text>
<!-- balloon -->
<g transform="translate(30 730)"><ellipse cx="0" cy="-1.500" rx="11" ry="8" fill="none" stroke="#5a4510" stroke-width="1.500"/><path d="M-6 5L-8 10L-2 6.500" fill="#e8b830" stroke="#5a4510" stroke-width="1.500" stroke-linejoin="round"/></g>
<!-- gradient -->
<defs><linearGradient id="tg" x1="0" y1="0" x2="1" y2="1"><stop offset="0" stop-color="#555"/><stop offset="1" stop-color="#ddd"/></linearGradient></defs>
<rect x="20.500" y="751.500" width="19" height="18" fill="url(#tg)" stroke="#cfcfcf" stroke-width="1.200"/>
<!-- fill -->
<use href="#bkt" transform="translate(30 792)"/>
<!-- layer move -->
<g transform="translate(30 822)"><rect x="-11" y="-11" width="5" height="5" class="icf"/><path d="M-8.500-8.500H10M-8.500-8.500V10" class="ic" style="stroke-width:1.200"/><path d="M-3-3L10 1L4 4L2 10Z" class="icf"/></g>
</svg>
<!-- colour chips -->
<div class="a" style="left:25px;top:858px;width:33px;height:34px;background:#c3ecfc;border:2px solid #3a3a3a;outline:1px solid #555;border-radius:3px"></div>
<div class="a" style="left:2px;top:838px;width:37px;height:38px;background:#3b3b3d;border:2px solid #8093c8;border-radius:4px"></div>
<div class="a" style="left:5px;top:897px;width:52px;height:17px;border:1px solid #555;border-radius:3px;background:#3f3f3f"></div>
<div class="a" style="left:8px;top:900px;width:46px;height:12px;background-color:#e8e8e8;background-image:linear-gradient(45deg,#555 25%,transparent 25%,transparent 75%,#555 75%),linear-gradient(45deg,#555 25%,transparent 25%,transparent 75%,#555 75%);background-size:12px 12px;background-position:0 0,6px 6px"></div>
<style>
#stp{left:62px;top:93px;width:280px;height:937px;background:#3a3a3a}
.stab{position:absolute;top:116px;height:30px;background:#484848;border:1px solid #2f2f2f;border-radius:2px;font-size:15.5px;line-height:28px;color:#e4e4e4;padding-left:32px;white-space:nowrap;overflow:hidden}
.brow{position:absolute;left:64px;width:261px;height:30px;background:#3e3e3e;border-top:1px solid #2a2a2a;font-size:15px;color:#e2e2e2;text-align:right;padding-right:5px;line-height:39px;white-space:nowrap;overflow:hidden}
</style>
<div class="a" id="stp"></div>
<div class="a" style="left:341px;top:93px;width:2px;height:937px;background:#2a2a2a"></div>
<div class="a" style="left:62px;top:109px;width:279px;height:403px;background:#3b3b3b;border-top:4px solid #484848"></div><div class="a" style="left:62px;top:148px;width:279px;height:4px;background:#464242"></div>
<div class="stab g" style="left:64px;width:89px;background:#687ba5;border-color:#42506f">鉛筆</div>
<div class="stab g" style="left:156px;width:90px">粉彩</div>
<div class="stab g" style="left:248px;width:90px">とろりフ</div>
<svg style="left:64px;top:116px" width="276" height="30" viewBox="64 116 276 30">
<g transform="translate(81 131)"><path d="M-10 10L-6-3L2-10L8-4L1 5Z" class="ic" style="stroke:#c9d2ea;stroke-width:1.400"/><path d="M0-8L6-2L2-2L0-5Z" fill="#c9d2ea"/></g>
<g transform="translate(174 131)"><path d="M-10 5L2-9L9-4L-3 10Z" class="ic" style="stroke-width:1.500"/><path d="M-10 5Q-9 10-3 10" class="ic" style="stroke-width:3"/></g>
<g transform="translate(266 131)"><path d="M-10 10L-6-3L2-9L8-3L2 5Z" class="ic" style="stroke-width:1.400"/><path d="M-10 10L-1 1" class="ic" style="stroke-width:1.100"/><path d="M3-10L9-4L11-6L5-12Z" class="icf"/></g>
</svg>
<div class="brow g" style="top:152px">树叶远景(木の葉遠景用ブラシ)</div>
<div class="brow g" style="top:182px">完结闪光（まとまりフラ）</div>
<div class="brow g" style="top:212px">纹理 12</div>
<div class="brow g" style="top:242px">细笔涂抹（細ぼけ伸ばし）</div>
<div class="brow g" style="top:272px">线稿钢笔（線画用ペン）</div>
<div class="brow g" style="top:302px">线稿用四角水彩（線画用-四角水彩）</div>
<div class="brow g" style="top:332px">消しバケツ</div>
<div class="brow g" style="top:362px">颜料正常-平笔（塗料普通-平）</div>
<div class="brow g" style="top:392px">とろりブラシ（液体笔刷） 2</div>
<div class="brow g" style="top:422px">毛笔（あら筆（モノクロ用）） 2</div>
<div class="brow g" style="top:452px;height:31px;background:#60739c;border-bottom:1px solid #2a2a2a"><span style="background:#4a5878;padding:3px 1px 1px 3px">鸣泣自制2</span></div>
<div class="a" style="left:66px;top:186px;width:27px;height:26px;background:#e8b830"></div>
<!-- scrollbar -->
<div class="a" style="left:326px;top:152px;width:14px;height:331px;background:#464646"></div>
<div class="a" style="left:327px;top:322px;width:12px;height:108px;background:#5c5c5c;border-radius:6px"></div>
<div class="a" style="left:326px;top:152px;width:14px;height:14px;background:#505050"></div>
<!-- footer -->
<div class="a" style="left:62px;top:484px;width:279px;height:27px;background:#454545"></div>
<svg style="left:62px;top:152px" width="280" height="360" viewBox="62 152 280 360">
<path d="M329.500 161L333 157.500L336.500 161M329.500 474L333 477.500L336.500 474" class="ic" style="stroke:#888;stroke-width:1.300"/>
<!-- brush strokes -->
<path d="M76 176Q100 162 120 162Q140 168 175 172Q195 170 205 163" fill="none" stroke="#e8e8e8" stroke-width="3" stroke-dasharray="2 1.200 4 .800 1.500 1" opacity=".85"/>
<path d="M96 193V201M99 191V202M102 194V201M105 190V202M108 192V201M111 191V200M114 193V201M117 190V201M120 192V200M123 191V201M126 193V200M129 192V199M132 194V199" stroke="#222" stroke-width="1.300" opacity=".8"/>
<g transform="translate(79 199)"><ellipse cx="0" cy="-1" rx="10" ry="7.500" fill="none" stroke="#5a4510" stroke-width="1.400"/><path d="M-5 5L-7 9L-2 6" fill="#e8b830" stroke="#5a4510" stroke-width="1.300"/></g>
<path d="M85 232Q110 219 128 221" fill="none" stroke="#161616" stroke-width="3" stroke-dasharray="4 2"/>
<path d="M128 221L134 224L142 228L154 233L165 233L180 231L195 226" fill="none" stroke="#f0f0f0" stroke-width="3.500" stroke-dasharray="3 6"/>
<path d="M165 233Q185 230 203 223" fill="none" stroke="#161616" stroke-width="2.500" stroke-dasharray="3 3"/>
<path d="M114 252Q130 251 140 257" fill="none" stroke="#bbb" stroke-width="2.500" stroke-linecap="round" opacity=".7"/>
<path d="M78 294Q100 280 125 281Q140 281 150 289L156 295Q175 294 205 281Q180 296 156 297L140 292Q125 285 110 284Q95 285 78 294Z" fill="#f2f2f2"/>
<path d="M72 319Q95 312 125 318" fill="none" stroke="#222" stroke-width="1.500" opacity=".7"/>
<use href="#bkt" transform="translate(80 351)"/>
<path d="M88 381Q110 366 140 372Q165 382 190 382" fill="none" stroke="#aaa" stroke-width="6" stroke-linecap="round" opacity=".55"/>
<path d="M80 414Q105 398 130 398Q150 400 165 410Q185 414 205 402Q185 418 162 416Q145 408 128 405Q105 404 80 414Z" fill="#eaeaea"/>
<path d="M95 406Q120 400 140 408Q160 418 195 408" fill="none" stroke="#222" stroke-width="1.500"/>
<path d="M82 442Q105 430 132 433Q150 436 165 443Q185 444 203 434" fill="none" stroke="#ddd" stroke-width="4" stroke-dasharray="6 1 3 .500" opacity=".8"/>
<path d="M82 474Q105 461 128 462Q150 470 170 474Q190 473 207 461" fill="none" stroke="#c8d2ea" stroke-width="1"/>
<path d="M122 462Q135 462 150 469Q160 473 170 474Q158 476 148 472Q135 465 122 462Z" fill="#fff"/>
<!-- footer icons -->
<g transform="translate(278 497)"><path d="M-7-3V7H7V-3" class="ic" style="stroke-width:1.300"/><path d="M0-7V3M-3 0L0 3L3 0" class="ic" style="stroke-width:1.300"/></g>
<g transform="translate(303 497)"><rect x="-8" y="-8" width="11" height="11" rx="1.500" class="ic" style="stroke-width:1.300"/><rect x="-4" y="-4" width="12" height="12" rx="1.500" class="ic" style="stroke-width:1.300;fill:#454545"/><path d="M2-1V5M-1 2H5" class="ic" style="stroke-width:1.200"/></g>
<g transform="translate(328 497)"><path d="M-7-5H7M-3-5V-8H3V-5M-5.500-5L-5 8H5L5.500-5M-2-2V5M0-2V5M2-2V5" class="ic" style="stroke-width:1.300"/></g>
</svg>
<style>
.plab{position:absolute;left:82px;font-size:15px;color:#e4e4e4;white-space:nowrap;line-height:16px}
.pval{position:absolute;width:60px;left:225px;text-align:right;font-size:15px;color:#e4e4e4;line-height:16px}
.psl{position:absolute;left:109px;height:10px;background:#585858;border:1px solid #6c6c6c}
.psep{position:absolute;left:72px;width:250px;height:2px;border-top:1px solid #2f2f2f;border-bottom:1px solid #565656}
.pbtn{position:absolute;left:303px;width:19px;height:30px;background:#505050;border:1px solid #626262;border-radius:2px}
</style>
<div class="a" style="left:62px;top:512px;width:279px;height:303px;background:#353535"></div>
<div class="a" style="left:63px;top:513px;width:22px;height:21px;background:#2f2f2f"></div>
<div class="a" style="left:85px;top:513px;width:151px;height:21px;background:#484848;border-radius:2px 2px 0 0"></div>
<div class="a" style="left:237px;top:513px;width:37px;height:21px;background:#454545;border-radius:2px 2px 0 0"></div>
<div class="a" style="left:120px;top:517px;font-size:12.5px;line-height:21px;color:#d8d8d8;white-space:nowrap;font-weight:500">工具屬性[鸣泣自制2]</div>
<div class="a" style="left:62px;top:534px;width:279px;height:251px;background:#404040;border-top:1px solid #4a4a4a"></div>
<div class="a" style="left:63px;top:540px;width:138px;height:48px;background:#b9b9b9"></div>
<div class="a" style="left:201px;top:540px;width:139px;height:48px;background:#4a4a4a"></div>
<div class="a g" style="left:63px;top:541px;width:73px;height:17px;background:#8a8a8a;color:#f0f0f0;font-size:15px;line-height:17px;white-space:nowrap">鸣泣自制2</div>
<div class="plab g" style="top:592px">筆刷尺寸</div>
<div class="psl" style="top:610px;width:93px"></div><div class="a" style="left:202px;top:619px;width:29px;height:1px;background:#6c6c6c"></div>
<div class="pval g" style="top:601px">200.0</div>
<div class="pbtn" style="top:592px"></div>
<div class="psep" style="top:627px"></div>
<div class="plab g" style="top:634px">不透明度</div>
<div class="psl" style="top:652px;width:122px"></div>
<div class="pval g" style="top:643px">100</div>
<div class="pbtn" style="top:634px"></div>
<div class="psep" style="top:669px"></div>
<div class="plab g" style="top:683px">消除鋸齒</div>
<div class="a" style="left:196px;top:676px;width:126px;height:30px;background:#4c4c4c;border:1px solid #606060;border-radius:2px"></div>
<div class="a" style="left:277px;top:677px;width:27px;height:28px;background:#6d8bd0"></div>
<div class="psep" style="top:711px"></div>
<div class="plab g" style="top:718px">抖動修正</div>
<div class="psl" style="top:736px;width:98px"></div><div class="a" style="left:207px;top:745px;width:24px;height:1px;background:#6c6c6c"></div>
<div class="pval g" style="top:727px">33</div>
<div class="a" style="left:62px;top:785px;width:279px;height:27px;background:#484848"></div>
<svg style="left:62px;top:512px" width="280" height="303" viewBox="62 512 280 303">
<g stroke="#8a8a8a" stroke-width="1"><path d="M68 519.500H78M68 523.500H78M68 527.500H78"/></g>
<!-- tab icons -->
<path d="M109 517L99 528" class="ic" style="stroke-width:3.500;stroke:#bbb"/><path d="M96 531L98 529" class="ic" style="stroke-width:1.300"/><circle cx="108" cy="530" r="2.600" class="ic" style="stroke-width:1.800"/><path d="M108 525.500V534.500M103.500 530H112.500M104.800 526.800L111.200 533.200M111.200 526.800L104.800 533.200" class="ic" style="stroke-width:1"/>
<g class="dim"><path d="M263 518L253 529" class="ic" style="stroke-width:3.500"/><path d="M255 534A5 5 0 0 1 265 534" class="ic" style="stroke-width:1.300"/></g>
<!-- preview stroke -->
<path d="M89 576Q125 553 153 554Q180 556 201 564Q225 576 254 574Q222 574 201 568Q178 560 153 555.500Q125 555 89 576Z" fill="#3a3a3a"/>
<path d="M201 564Q225 576 254 574Q222 574 201 568Z" fill="#3a3a3a" opacity=".6"/>
<!-- lock -->
<g transform="translate(325 575)"><rect x="-2" y="-1" width="10" height="8" rx="1" class="icf"/><path d="M-6 1V-3A3 3 0 0 1 0-3V-1" class="ic" style="stroke-width:1.500"/></g>
<!-- spinners -->
<g class="ic" style="stroke:#a8a8a8;stroke-width:1.200"><path d="M289.500 606L293.500 602L297.500 606M289.500 611L293.500 615L297.500 611M289.500 648L293.500 644L297.500 648M289.500 653L293.500 657L297.500 653M289.500 732L293.500 728L297.500 732M289.500 737L293.500 741L297.500 737"/></g>
<path d="M308 601L312.500 605.500L317 601M308 607L312.500 611.500L317 607" class="ic" style="stroke-width:1.500"/>
<rect x="308" y="644" width="9" height="9" rx="1" class="ic" style="stroke-width:1.200"/><path d="M308.500 652.500L316.500 644.500" class="ic" style="stroke-width:1.200"/>
<!-- antialias -->
<path d="M205 688h2v-3h3v-2h4v2h3v3h2v6h-2v3h-3v2h-4v-2h-3v-3h-2z" class="icf" transform="translate(-1.500 0)"/>
<circle cx="236" cy="691" r="8.500" fill="#c8c8c8"/>
<defs><radialGradient id="aa1"><stop offset=".55" stop-color="#c0c0c0"/><stop offset="1" stop-color="#c0c0c0" stop-opacity="0"/></radialGradient><radialGradient id="aa2"><stop offset="0" stop-color="#c9c3d4"/><stop offset="1" stop-color="#c9c3d4" stop-opacity="0"/></radialGradient></defs>
<circle cx="263" cy="691" r="10" fill="url(#aa1)"/>
<circle cx="290" cy="691" r="11" fill="url(#aa2)"/>
<path d="M308 689L312.500 693.500L317 689" class="ic" style="stroke-width:1.500"/>
<!-- footer icons -->
<g transform="translate(303 798)"><path d="M-4.500-6.500A8 8 0 1 0 0-8" class="ic" style="stroke-width:1.300"/><path d="M0-8V0" class="ic" style="stroke-width:1.300"/><circle cx="0" cy="0" r="2" class="icf"/><path d="M-8-7L-6-9" class="ic" style="stroke-width:1"/></g>
<g transform="translate(328 798)"><path d="M8 8L0 0A5 5 0 1 0-5-8L-2-5L-3-3L-5-2L-8-5A5 5 0 0 0-1 2L6 9Z" class="ic" style="stroke-width:1.300"/></g>
</svg>
<div class="a" style="left:62px;top:815px;width:279px;height:215px;background:#353535"></div>
<div class="a" style="left:62px;top:835px;width:279px;height:195px;background:#424242"></div>
<div class="a" style="left:63px;top:815px;width:22px;height:20px;background:#2f2f2f"></div>
<div class="a" style="left:85px;top:815px;width:37px;height:21px;background:#424242"></div>
<div class="a" style="left:123px;top:815px;width:218px;height:19px;background:#4a4a4a;background-image:repeating-linear-gradient(90deg,transparent 0,transparent 37px,#333 37px,#333 38px)"></div>
<div class="a" style="left:326px;top:815px;width:15px;height:19px;background:#5a5a5a;border:1px solid #7c7c7c;border-radius:2px"></div>
<!-- wheel -->
<div class="a" style="left:118px;top:841px;width:168px;height:168px;border-radius:50%;background:#2a2a2a"></div>
<div class="a" style="left:119px;top:842px;width:166px;height:166px;border-radius:50%;background:conic-gradient(from 0deg,#f4e800 0,#10d010 16.670%,#00c8a0 30%,#0090e0 40%,#3030e0 50%,#a020d0 60%,#e81898 70%,#f01840 80%,#ff5000 90%,#f4e800 100%)"></div>
<div class="a" style="left:132px;top:855px;width:140px;height:140px;border-radius:50%;background:#424242;border:1px solid #2a2a2a"></div>
<svg style="left:62px;top:815px" width="280" height="215" viewBox="62 815 280 215">
<g stroke="#8a8a8a" stroke-width="1"><path d="M68 821.500H78M68 825.500H78M68 829.500H78"/></g>
<circle cx="103" cy="828" r="8" class="ic" style="stroke-width:1.400"/><rect x="99" y="824" width="8" height="8" rx="2" class="icf"/>
<g class="dim"><rect x="133" y="821" width="17" height="13" class="icf"/><rect x="171" y="821" width="17" height="3" class="icf"/><rect x="171" y="827" width="17" height="3" class="icf"/><path d="M208 834L214 822L217 828L220 822L226 834Z" class="icf"/><rect x="246" y="821" width="18" height="13" class="icf"/><rect x="285" y="824" width="16" height="10" class="ic"/><rect x="318" y="822" width="6" height="10" class="icf"/></g>
<path d="M330 823L333.500 826.500L337 823" class="ic" style="stroke-width:1.300"/>
<defs>
<linearGradient id="tw" gradientUnits="userSpaceOnUse" x1="0" y1="875" x2="0" y2="975"><stop offset="0" stop-color="#fff"/><stop offset="1" stop-color="#000"/></linearGradient>
<linearGradient id="tk" gradientUnits="userSpaceOnUse" x1="171" y1="0" x2="262" y2="0"><stop offset="0" stop-color="#ea1c08" stop-opacity="0"/><stop offset=".3" stop-color="#ea1c08" stop-opacity=".55"/><stop offset=".65" stop-color="#ea1c08" stop-opacity=".93"/><stop offset="1" stop-color="#ea1c08" stop-opacity="1"/></linearGradient>
</defs>
<path d="M171 873L262 925L171 977Z" fill="url(#tw)"/>
<path d="M171 873L262 925L171 977Z" fill="url(#tk)"/>
<circle cx="171" cy="950" r="4.500" fill="none" stroke="#ddd" stroke-width="1.200"/><circle cx="171" cy="950" r="5.500" fill="none" stroke="#222" stroke-width=".800"/>
<g transform="translate(135.500 887) rotate(30)"><rect x="-6.500" y="-5" width="13" height="10" fill="#e02020" stroke="#fff" stroke-width="1.800"/></g>
<!-- bottom HLS -->
<g font-family="IPAGothic,'Liberation Mono',monospace" font-size="13" fill="#8a8a8a"><rect x="188" y="1012" width="9" height="10" fill="#6a6a6a"/><text x="190" y="1021" font-size="9" fill="#333">H</text><text x="216" y="1023">0</text><rect x="228" y="1012" width="9" height="10" fill="#6a6a6a"/><text x="230" y="1021" font-size="9" fill="#333">L</text><text x="249" y="1023">27</text><rect x="268" y="1012" width="9" height="10" fill="#6a6a6a"/><text x="270" y="1021" font-size="9" fill="#333">S</text><text x="296" y="1023">0</text></g>
<circle cx="325" cy="1013" r="8.500" class="ic" style="stroke:#777;stroke-width:1.300"/><rect x="321" y="1009" width="8" height="8" rx="1.500" class="ic" style="stroke:#777;stroke-width:1.300"/>
</svg>
<!-- small chips in colour panel -->
<div class="a" style="left:82px;top:977px;width:29px;height:27px;background:#8fb8bd;border:2px solid #3a3a3a;outline:1px solid #555;border-radius:3px"></div>
<div class="a" style="left:63px;top:959px;width:31px;height:30px;background:#3b3b3d;border:2px solid #6f80b0;border-radius:4px"></div>
<div class="a" style="left:66px;top:1010px;width:44px;height:13px;border:1px solid #555;border-radius:3px;background-color:#aaa;background-image:linear-gradient(45deg,#444 25%,transparent 25%,transparent 75%,#444 75%),linear-gradient(45deg,#444 25%,transparent 25%,transparent 75%,#444 75%);background-size:10px 10px;background-position:0 0,5px 5px"></div>
<style>
#rdock{left:1518px;top:91px;width:402px;height:939px;background:#3b3b3b}
.rp{position:absolute;left:1537px;width:332px}
.rtab{position:absolute;height:20px;background:#484848;border-radius:2px 2px 0 0}
.rbtn{position:absolute;left:1874px;width:42px;height:40px;background:#4a4a4a;border:1px solid #424242;box-shadow:0 2px 0 #333}
.ltxt{position:absolute;font-size:14.5px;color:#e4e4e4;white-space:nowrap;line-height:16px}
</style>
<div class="a" id="rdock"></div>
<div class="a" style="left:1517px;top:93px;width:2px;height:937px;background:#343434"></div>
<!-- navigator -->
<div class="rp" style="top:88px;height:238px;background:#353535"></div>
<div class="rtab" style="left:1560px;top:88px;width:37px"></div><div class="rtab" style="left:1598px;top:88px;width:37px"></div>
<div class="rtab" style="left:1636px;top:88px;width:76px;background:#4d4d4d"></div>
<div class="rtab" style="left:1713px;top:88px;width:37px"></div><div class="rtab" style="left:1751px;top:88px;width:37px"></div><div class="rtab" style="left:1789px;top:88px;width:37px"></div>
<div class="a" style="left:1672px;top:92px;font-size:12.5px;line-height:20px;color:#dcdcdc;font-weight:500;white-space:nowrap">導航器</div>
<div class="rp" style="top:108px;height:5px;background:#4d4d4d"></div>
<div class="rp" style="top:113px;height:157px;background:#2c2c2c"></div>
<div class="a" style="left:1610px;top:114px;width:187px;height:154px;background:#fff"></div>
<div class="a" style="left:1590px;top:112px;width:233px;height:143px;border:1px solid #e03020;border-top:none"></div>
<div class="rp" style="top:270px;height:55px;background:#484848;border:1px solid #555"></div>
<div class="a" style="left:1542px;top:278px;width:142px;height:15px;background:#2c2c2c;border:1px solid #666;overflow:hidden"><div class="a" style="left:0;top:0;width:0;height:0;border-left:140px solid transparent;border-top:13px solid #4a4a4a"></div><div class="a" style="left:0;top:0;width:80px;height:13px;background:#4a4a4a;opacity:.6"></div></div>
<div class="a" style="left:1621px;top:273px;width:5px;height:25px;background:#8a8a8a;border:1px solid #5a5a5a"></div>
<div class="a" style="left:1542px;top:303px;width:142px;height:16px;background:#2c2c2c;border:1px solid #666;overflow:hidden"><div class="a" style="left:20px;top:-22px;width:100px;height:30px;border-radius:50%;background:#4a4a4a"></div></div>
<div class="a" style="left:1611px;top:298px;width:5px;height:25px;background:#8a8a8a;border:1px solid #5a5a5a"></div>
<div class="ltxt g" style="left:1690px;top:278px;width:50px;text-align:right;font-size:15.5px">88.7</div>
<div class="ltxt g" style="left:1690px;top:303px;width:50px;text-align:right;font-size:15.5px">0.0</div>
<!-- layer property -->
<div class="rp" style="top:328px;height:143px;background:#353535"></div>
<div class="rtab" style="left:1560px;top:328px;width:88px;background:#424242;height:19px"></div>
<div class="rtab" style="left:1650px;top:328px;width:100px;height:18px"></div>
<div class="a" style="left:1597px;top:331px;font-size:12.5px;line-height:20px;color:#dcdcdc;font-weight:500;white-space:nowrap">圖層屬性</div>
<div class="a" style="left:1687px;top:331px;font-size:12.5px;line-height:20px;color:#6a6a6a;white-space:nowrap">對齊・均分</div>
<div class="rp" style="top:346px;height:125px;background:#424242"></div>
<div class="a" style="left:1544px;top:364px;width:306px;height:1px;background:#5c5c5c"></div>
<div class="ltxt g" style="left:1549px;top:356px;background:#424242">效果</div>
<div class="a" style="left:1558px;top:374px;width:292px;height:25px;background:#4c4c4c;border:1px solid #626262;border-radius:3px"></div>
<div class="ltxt g" style="left:1584px;top:378px">邊界效果</div>
<div class="ltxt g" style="left:1682px;top:378px">網點</div>
<div class="ltxt g" style="left:1780px;top:378px">圖層顏色</div>
<div class="a" style="left:1544px;top:411px;width:306px;height:1px;background:#5c5c5c"></div>
<div class="ltxt g" style="left:1549px;top:403px;background:#424242">顯示顏色</div>
<div class="a" style="left:1557px;top:425px;width:227px;height:25px;background:#4c4c4c;border:1px solid #626262;border-radius:3px"></div>
<div class="ltxt g" style="left:1662px;top:429px">彩色</div>
<!-- layer panel -->
<div class="rp" style="top:476px;height:554px;background:#353535"></div>
<div class="rtab" style="left:1560px;top:476px;width:64px;background:#484848;height:22px"></div>
<div class="rtab" style="left:1626px;top:476px;width:87px;height:20px"></div>
<div class="rtab" style="left:1715px;top:476px;width:88px;height:20px"></div>
<div class="a" style="left:1597px;top:480px;font-size:12.5px;line-height:20px;color:#dcdcdc;font-weight:500;white-space:nowrap">圖層</div>
<div class="a" style="left:1662px;top:480px;font-size:12.5px;line-height:20px;color:#686868;white-space:nowrap">歷史記錄</div>
<div class="a" style="left:1751px;top:480px;font-size:12.5px;line-height:20px;color:#686868;white-space:nowrap">自動動作</div>
<div class="rp" style="top:497px;height:86px;background:#484848"></div>
<div class="a" style="left:1538px;top:501px;width:49px;height:25px;background:#555;border:1px solid #6c6c6c;border-radius:3px"></div>
<div class="a" style="left:1591px;top:501px;width:112px;height:25px;background:#555;border:1px solid #6c6c6c;border-radius:3px"></div>
<div class="ltxt g" style="left:1624px;top:505px;font-size:15.5px">普通</div>
<div class="a" style="left:1711px;top:507px;width:108px;height:11px;background-color:#fff;background-image:linear-gradient(45deg,#c4c4c4 25%,transparent 25%,transparent 75%,#c4c4c4 75%),linear-gradient(45deg,#c4c4c4 25%,transparent 25%,transparent 75%,#c4c4c4 75%);background-size:11px 11px;background-position:0 0,5.500px 5.500px"></div>
<div class="a" style="left:1711px;top:507px;width:108px;height:11px;background:linear-gradient(90deg,rgba(220,220,220,0),rgba(216,216,216,.95))"></div>
<div class="a" style="left:1818px;top:501px;width:5px;height:26px;background:#8a8a8a;border:1px solid #5a5a5a"></div>
<div class="ltxt g" style="left:1800px;top:505px;width:53px;text-align:right;font-size:15.500px">100</div>
<div class="a" style="left:1824px;top:528px;width:45px;height:24px;background:#555;border:1px solid #6c6c6c;border-radius:3px"></div>
<div class="a" style="left:1537px;top:555px;width:25px;height:25px;background:#5f719b;border:1px solid #7c8db5;border-radius:2px"></div>
<svg style="left:1518px;top:85px" width="402" height="500" viewBox="1518 85 402 500">
<g stroke="#8a8a8a" stroke-width="1"><path d="M1543 94.500H1553M1543 98.500H1553M1543 102.500H1553M1543 334.500H1553M1543 338.500H1553M1543 342.500H1553M1543 482.500H1553M1543 486.500H1553M1543 490.500H1553"/></g>
<!-- nav tabs icons (dim) -->
<g class="dim"><path d="M1570 104Q1570 94 1579 94Q1588 94 1588 101M1572 106H1584" class="ic"/><path d="M1583 100L1588 106L1592 100Z" class="icf"/>
<circle cx="1619" cy="101" r="6" class="icf"/><path d="M1609 108L1614 100L1620 108Z" class="icf"/>
<rect x="1724" y="94" width="15" height="14" rx="2" class="ic"/><rect x="1727" y="97" width="9" height="11" class="icf" opacity=".6"/>
<path d="M1761 108Q1761 95 1770 95Q1779 95 1779 108M1764 102H1776" class="ic"/>
<circle cx="1808" cy="104" r="9" class="ic"/><path d="M1808 102V108" class="ic" style="stroke-width:2.200"/><circle cx="1808" cy="98" r="1.400" class="icf"/></g>
<rect x="1648" y="94" width="12" height="9" rx="1" class="ic" style="stroke-width:1.300;fill:#777"/><path d="M1645 97V106H1657" class="ic" style="stroke-width:1.300"/>
<rect x="1537" y="108" width="332" height="5" fill="#4d4d4d"/>
<!-- nav control icons -->
<g class="ic" style="stroke-width:1.300;stroke:#c4c4c4">
<circle cx="1752" cy="285.500" r="8.500"/><path d="M1747 285.500H1757"/>
<circle cx="1777" cy="285.500" r="8.500"/><path d="M1772 285.500H1782M1777 280.500V290.500"/>
<circle cx="1802" cy="285.500" r="8.500"/>
<path d="M1824 278V293M1824 303V319" style="stroke:#5a5a5a;stroke-width:1"/>
<rect x="1824.500" y="279.500" width="7" height="7"/><rect x="1831.500" y="286.500" width="7" height="7"/><path d="M1826 288V292H1830M1837 284V280H1833M1828 283L1835 290"/>
<rect x="1849.500" y="279" width="13" height="13" rx="1"/><path d="M1852 289L1860 282M1852 285.500V289H1855.500M1860 285.500V282H1856.500"/>
<path d="M1746 307A7.500 7.500 0 1 1 1747 316"/><path d="M1758 307A7.500 7.500 0 1 0 1757 316" transform="translate(25 0)"/>
<circle cx="1802" cy="312" r="8"/><path d="M1802 303V312"/>
<path d="M1823.500 305L1829.500 311.500L1823.500 318ZM1839.500 305L1833.500 311.500L1839.500 318Z"/><path d="M1831.500 303V320"/>
<path d="M1850 303.500H1862L1856 309.500ZM1850 319.500H1862L1856 313.500Z"/><path d="M1848 311.500H1864"/>
</g>
<rect x="1798" y="281.500" width="8" height="8" rx="2" class="icf"/>
<path d="M1743 306L1747.500 312L1750.500 305Z M1788 306L1783.500 312L1780.500 305Z" class="icf"/><circle cx="1802" cy="312" r="2.200" class="icf"/><path d="M1839.500 305L1833.500 311.500L1839.500 318Z M1850 303.500H1862L1856 309.500Z" class="icf"/>
<!-- layer property tab icons -->
<g class="ic" style="stroke-width:1.300"><path d="M1570 335L1578 331L1586 335L1578 339ZM1570 339L1578 343L1586 339M1570 343L1578 347L1586 343"/></g><g class="icf"><rect x="1582" y="342" width="2.500" height="2.500"/><rect x="1586" y="342" width="2.500" height="2.500"/><rect x="1582" y="346" width="2.500" height="2.500"/><rect x="1586" y="346" width="2.500" height="2.500"/></g>
<g class="dim"><rect x="1660" y="333" width="15" height="12" class="ic"/><rect x="1663" y="336" width="5" height="4" class="icf"/></g>
<!-- effects icons -->
<circle cx="1571" cy="386.500" r="8" class="ic" style="stroke-width:1.300;stroke:#c4c4c4"/>
<g class="icf" opacity=".8"><circle cx="1664" cy="381" r="1.300"/><circle cx="1669.500" cy="381" r="1.300"/><circle cx="1675" cy="381" r="1.300"/><circle cx="1666.800" cy="384" r="1.300"/><circle cx="1672.200" cy="384" r="1.300"/><circle cx="1664" cy="387" r="1.300"/><circle cx="1669.500" cy="387" r="1.300"/><circle cx="1675" cy="387" r="1.300"/><circle cx="1666.800" cy="390" r="1.300"/><circle cx="1672.200" cy="390" r="1.300"/><circle cx="1664" cy="393" r="1.300"/><circle cx="1669.500" cy="393" r="1.300"/><circle cx="1675" cy="393" r="1.300"/></g>
<rect x="1763" y="383" width="12" height="12" rx="2" class="ic" style="stroke-width:1.300"/><rect x="1759.500" y="379.500" width="12" height="12" rx="2" fill="#9a9a9a" stroke="#cfcfcf" stroke-width="1.200"/>
<circle cx="1645.500" cy="433" r="4.500" fill="#e84030"/><circle cx="1642" cy="440" r="4.500" fill="#40b840"/><circle cx="1649" cy="440" r="4.500" fill="#3080e0"/><circle cx="1645.500" cy="438" r="2" fill="#eee"/>
<path d="M1770 435L1774 439L1778 435" class="ic" style="stroke-width:1.400"/>
<!-- layer tab icons -->
<g class="ic" style="stroke-width:1.400"><path d="M1570 483L1578 479L1586 483L1578 487ZM1570 487.500L1578 491.500L1586 487.500M1570 492L1578 496L1586 492"/></g>
<g class="dim"><path d="M1637 484H1650Q1655 484 1655 488.500Q1655 493 1650 493H1640" class="ic"/><circle cx="1637" cy="484" r="1.800" class="icf"/><path d="M1726 494V485H1744V494M1726 485L1743 481" class="ic"/></g>
<!-- row1 -->
<rect x="1544" y="505" width="17" height="16" rx="1.500" class="ic" style="stroke-width:1.200;stroke:#aaa"/><path d="M1573 511.500L1577 515.500L1581 511.500M1689 511.500L1693 515.500L1697 511.500" class="ic" style="stroke-width:1.400"/>
<path d="M1855.500 511L1859.500 507L1863.500 511M1855.500 516L1859.500 520L1863.500 516" class="ic" style="stroke:#a8a8a8;stroke-width:1.200"/>
<!-- row2 icons -->
<g transform="translate(1619 540)"><rect x="-8" y="-3" width="11" height="11" rx="1" class="ic" style="stroke-width:1.200"/><rect x="-4" y="-8" width="12" height="12" class="ic" style="stroke-width:1.200;stroke-dasharray:2 1.500"/><rect x="-3" y="-2" width="8" height="8" class="icf" opacity=".7"/></g>
<g transform="translate(1644 540)"><path d="M-2 9L-1-3H1L2 9Z" class="icf"/><path d="M-3-6H3V-3H-3Z" class="icf"/><path d="M-10-8L-3-5M10-8L3-5M-10-1L-3-4M10-1L3-4" class="ic" style="stroke-width:1.100"/></g>
<g transform="translate(1669 540)"><path d="M-7-9H-1V0Q-1 4-4 4Q-7 4-7 0Z" class="ic" style="stroke-width:1.200"/><path d="M-5-7L-3-5L-5-3" class="ic" style="stroke-width:1"/><path d="M-4 4V8H6M3 5L6 8L3 11" class="ic" style="stroke-width:1.200" transform="translate(0 -2)"/></g>
<g transform="translate(1694 540)"><rect x="-6" y="-1" width="12" height="9" rx="1" class="icf"/><path d="M-3.500-1V-4.500A3.500 3.500 0 0 1 3.500-4.500V-1" class="ic" style="stroke-width:1.500"/></g>
<g transform="translate(1719 540)"><g class="icf"><rect x="-1" y="-9" width="4.500" height="4.500"/><rect x="3.500" y="-4.500" width="4.500" height="4.500"/><rect x="8" y="-9" width="3" height="4.500"/><rect x="-1" y="0" width="4.500" height="4.500" opacity=".5"/><rect x="8" y="0" width="3" height="4.500"/></g><rect x="-9" y="1" width="9" height="7" rx="1" class="icf"/><path d="M-7 1V-1.500A2.500 2.500 0 0 1-2-1.500V1" class="ic" style="stroke-width:1.300"/></g>
<g class="dim"><g transform="translate(1746 540)"><rect x="-8" y="-8" width="14" height="14" rx="2" class="icf"/><circle cx="-1" cy="-1" r="4" fill="#484848"/><path d="M3 4L9 10M9 4L3 10" class="ic" style="stroke-width:1.300"/></g>
<g transform="translate(1793 540)"><path d="M-8 6V-8H6Z" class="icf"/><path d="M8-8L-6 8" class="ic" style="stroke-width:1.300"/><path d="M3 4L9 10M9 4L3 10" class="ic" style="stroke-width:1.300"/></g></g>
<path d="M1763 538L1767 542L1771 538M1809 538L1813 542L1817 538" class="ic" style="stroke-width:1.300;stroke:#8a8a8a"/>
<rect x="1835" y="538" width="12" height="11" fill="#fff"/><rect x="1829" y="531" width="12" height="12" fill="#3a86f0" stroke="#2a5aa8" stroke-width=".800"/>
<path d="M1853 537.500L1858 542.500L1863 537.500" class="ic" style="stroke-width:1.500"/>
<!-- row3 icons -->
<g transform="translate(1549.500 567.500)"><rect x="-8" y="-8" width="16" height="16" rx="1.500" fill="none" stroke="#dfe6fa" stroke-width="1.300"/><path d="M-8-2.500H8M-8 3H8" stroke="#dfe6fa" stroke-width="1.100"/><path d="M-6-5.500H-2M-6 0H-2M-6 5.500H-2" stroke="#dfe6fa" stroke-width="1"/></g>
<g transform="translate(1681 567)"><path d="M-8-8H6V2M-8-8V5L-5 8H0" class="ic" style="stroke-width:1.300"/><circle cx="6" cy="8" r="4" class="ic" style="stroke-width:1.100;fill:#484848"/><path d="M4 8H8M6 6V10" class="ic" style="stroke-width:1"/></g>
<g transform="translate(1706 567)"><rect x="-8" y="-8" width="14" height="14" rx="1.500" class="ic" style="stroke-width:1.300"/><path d="M-5-3L-1-5L3-3V2L-1 4L-5 2ZM-5-3L-1-1L3-3M-1-1V4" class="ic" style="stroke-width:1"/><circle cx="7" cy="8" r="4" class="ic" style="stroke-width:1.100;fill:#484848"/><path d="M5 8H9M7 6V10" class="ic" style="stroke-width:1"/></g>
<g transform="translate(1730 567)"><path d="M-9 6V-8H-4L-2-6H6V6Z" class="icf"/><circle cx="7" cy="8" r="4" class="ic" style="stroke-width:1.100;fill:#484848"/><path d="M5 8H9M7 6V10" class="ic" style="stroke-width:1"/></g>
<g class="dim"><g transform="translate(1755 567)"><rect x="-2" y="-9" width="10" height="10" class="ic" style="stroke-width:1.200"/><rect x="-8" y="-2" width="10" height="10" class="ic" style="stroke-width:1.200"/></g><g transform="translate(1780 567)"><rect x="-2" y="-9" width="10" height="10" class="ic" style="stroke-width:1.200"/><rect x="-8" y="-2" width="10" height="10" class="ic" style="stroke-width:1.200"/></g>
<g transform="translate(1831 567)"><rect x="-9" y="-4" width="18" height="12" rx="1" class="icf"/><circle cx="2" cy="2" r="3.500" fill="#484848"/><rect x="-2" y="-7" width="7" height="3" class="icf"/></g></g>
<rect x="1799" y="560" width="15" height="15" rx="1.500" fill="#e4e4e4"/><circle cx="1806.500" cy="567.500" r="4" fill="#2a2a2a"/>
<g transform="translate(1856.500 567.500)"><path d="M-7-5H7M-3-5V-8H3V-5M-5.500-5L-5 8H5L5.500-5M-2-2V5M0-2V5M2-2V5" class="ic" style="stroke-width:1.300"/></g>
</svg>
<svg style="left:0;top:0" width="1920" height="1080" viewBox="0 0 1920 1080"><g transform="translate(1610 114.500) scale(0.2030) translate(-461 -310)" opacity=".8"><use href="#art"/></g></svg>
<!-- far-right buttons -->
<div class="rbtn" style="top:88px"></div><div class="rbtn" style="top:134px"></div><div class="rbtn" style="top:180px"></div><div class="rbtn" style="top:226px"></div><div class="rbtn" style="top:272px"></div><div class="rbtn" style="top:318px"></div><div class="rbtn" style="top:364px"></div><div class="rbtn" style="top:410px"></div><div class="rbtn" style="top:456px;height:38px"></div><div class="rbtn" style="top:495px;height:37px"></div>
<svg style="left:1874px;top:88px" width="42" height="450" viewBox="1874 88 42 450">
<g class="ic" style="stroke-width:1.700;stroke:#d0d0d0">
<path d="M1904 100A11 11 0 1 0 1906 112" style="stroke-width:2"/><path d="M1890 103L1903 116M1890 109V103H1896" style="stroke-width:2"/>
<g id="fold"><path d="M1884 164V146H1891L1893 149H1906V164Z"/></g>
<path d="M1895 151V159M1891.500 156L1895 159.500L1898.500 156M1890 162H1900" style="stroke-width:1.600"/>
<path d="M1884 210V192H1891L1893 195H1906V210Z"/><rect x="1889" y="198" width="12" height="10" rx="1" style="stroke-width:1.300"/><path d="M1893 208V203H1897V208" style="stroke-width:1.200"/>
<path d="M1884 256V238H1891L1893 241H1906V256Z"/><path d="M1888 243L1902 254M1902 243L1888 254" style="stroke-width:3.200"/>
<path d="M1884 302V284H1891L1893 287H1906V302Z"/><rect x="1889" y="290" width="12" height="10" style="stroke-width:1.300"/>
<path d="M1884 348V330H1891L1893 333H1906V348Z"/><rect x="1888.500" y="336" width="13" height="10" style="stroke-width:1.300"/><path d="M1888.500 339.500H1901.500M1894 339.500V346" style="stroke-width:1.200"/>
<path d="M1884 394V376H1891L1893 379H1906V394Z"/><path d="M1889 381L1893 384M1901 381L1897 384M1889 392L1893 389M1901 392L1897 389" style="stroke-width:1.500"/>
<path d="M1884 440V422H1891L1893 425H1906V440Z"/><rect x="1889" y="428" width="12" height="10" style="stroke-width:1.300"/>
<path d="M1884 485V467H1891L1893 470H1906V485Z"/><path d="M1890 482L1891 478L1900 469L1903 472L1894 481Z" style="stroke-width:1.300"/>
<path d="M1884 523V506H1891L1893 509H1906V523Z"/><path d="M1890 513L1895 510.500L1900 513V518.500L1895 521L1890 518.500ZM1890 513L1895 515.500L1900 513M1895 515.500V521" style="stroke-width:1.200"/>
</g>
<path d="M1890 300L1894 294L1897 297L1899 295L1901 300Z M1890 438L1894 432L1897 435L1899 433L1901 438Z" class="icf"/>
</svg>
<div class="a" style="left:1537px;top:583px;width:317px;height:447px;background:#3c3c3c"></div>
<div class="a" style="left:1854px;top:583px;width:15px;height:447px;background:#404040"></div>
<div class="a" style="left:1537px;top:584px;width:317px;height:1px;background:#282828"></div>
<div class="a" style="left:1596px;top:589px;width:33px;height:27px;background-color:#fff;background-image:linear-gradient(45deg,#cfcfcf 25%,transparent 25%,transparent 75%,#cfcfcf 75%),linear-gradient(45deg,#cfcfcf 25%,transparent 25%,transparent 75%,#cfcfcf 75%);background-size:11px 11px;background-position:0 0,5.500px 5.500px"></div>
<div class="ltxt g" style="left:1640px;top:588px;font-size:15.500px">100 %普通</div>
<div class="ltxt g" style="left:1640px;top:603px;font-size:15.500px">圖層 3</div>
<div class="a" style="left:1537px;top:620px;width:317px;height:1px;background:#282828"></div>
<div class="a" style="left:1596px;top:625px;width:33px;height:27px;background-color:#fff;background-image:linear-gradient(45deg,#cfcfcf 25%,transparent 25%,transparent 75%,#cfcfcf 75%),linear-gradient(45deg,#cfcfcf 25%,transparent 25%,transparent 75%,#cfcfcf 75%);background-size:11px 11px;background-position:0 0,5.500px 5.500px"></div>
<div class="ltxt g" style="left:1640px;top:624px;font-size:15.500px">14 %普通</div>
<div class="ltxt g" style="left:1640px;top:639px;font-size:15.500px">圖層 2</div>
<div class="a" style="left:1537px;top:658px;width:317px;height:1px;background:#282828"></div>
<div class="a" style="left:1596px;top:663px;width:33px;height:27px;background-color:#fff;background-image:linear-gradient(45deg,#cfcfcf 25%,transparent 25%,transparent 75%,#cfcfcf 75%),linear-gradient(45deg,#cfcfcf 25%,transparent 25%,transparent 75%,#cfcfcf 75%);background-size:11px 11px;background-position:0 0,5.500px 5.500px"></div>
<div class="ltxt g" style="left:1640px;top:662px;font-size:15.500px">100 %普通</div>
<div class="ltxt g" style="left:1640px;top:677px;font-size:15.500px">圖層 5</div>
<div class="a" style="left:1586px;top:695px;width:268px;height:36px;background:#5f7299"></div>
<div class="a" style="left:1592px;top:696px;width:40px;height:33px;border:1px solid #e8e8e8"></div>
<div class="a" style="left:1537px;top:694px;width:317px;height:1px;background:#282828"></div>
<div class="a" style="left:1596px;top:699px;width:33px;height:27px;background-color:#fff;background-image:linear-gradient(45deg,#cfcfcf 25%,transparent 25%,transparent 75%,#cfcfcf 75%),linear-gradient(45deg,#cfcfcf 25%,transparent 25%,transparent 75%,#cfcfcf 75%);background-size:11px 11px;background-position:0 0,5.500px 5.500px"></div>
<div class="ltxt g" style="left:1640px;top:698px;font-size:15.500px">100 %普通</div>
<div class="ltxt g" style="left:1640px;top:713px;font-size:15.500px">圖層 7</div>
<div class="a" style="left:1537px;top:732px;width:317px;height:1px;background:#282828"></div>
<div class="a" style="left:1596px;top:737px;width:33px;height:27px;background-color:#fff;background-image:linear-gradient(45deg,#cfcfcf 25%,transparent 25%,transparent 75%,#cfcfcf 75%),linear-gradient(45deg,#cfcfcf 25%,transparent 25%,transparent 75%,#cfcfcf 75%);background-size:11px 11px;background-position:0 0,5.500px 5.500px"></div>
<div class="ltxt g" style="left:1640px;top:736px;font-size:15.500px">100 %普通</div>
<div class="ltxt g" style="left:1640px;top:751px;font-size:15.500px">圖層 6</div>
<div class="a" style="left:1537px;top:768px;width:317px;height:1px;background:#282828"></div>
<div class="a" style="left:1596px;top:773px;width:33px;height:27px;background-color:#fff;background-image:linear-gradient(45deg,#cfcfcf 25%,transparent 25%,transparent 75%,#cfcfcf 75%),linear-gradient(45deg,#cfcfcf 25%,transparent 25%,transparent 75%,#cfcfcf 75%);background-size:11px 11px;background-position:0 0,5.500px 5.500px"></div>
<div class="ltxt g" style="left:1640px;top:772px;font-size:15.500px">30 %普通</div>
<div class="ltxt g" style="left:1640px;top:787px;font-size:15.500px">圖層 4</div>
<div class="a" style="left:1537px;top:806px;width:317px;height:1px;background:#282828"></div>
<div class="a" style="left:1596px;top:811px;width:33px;height:27px;background-color:#fff;background-image:linear-gradient(45deg,#cfcfcf 25%,transparent 25%,transparent 75%,#cfcfcf 75%),linear-gradient(45deg,#cfcfcf 25%,transparent 25%,transparent 75%,#cfcfcf 75%);background-size:11px 11px;background-position:0 0,5.500px 5.500px"></div>
<div class="ltxt g" style="left:1640px;top:810px;font-size:15.500px">100 %普通</div>
<div class="ltxt g" style="left:1640px;top:825px;font-size:15.500px">圖層 1</div>
<div class="a" style="left:1537px;top:842px;width:317px;height:1px;background:#282828"></div>
<div class="a" style="left:1596px;top:847px;width:33px;height:27px;background:#fff"></div>
<div class="a" style="left:1645px;top:847px;width:22px;height:22px;background:#fff"></div>
<div class="ltxt g" style="left:1672px;top:860px;font-size:15.500px">紙張</div>
<div class="a" style="left:1537px;top:880px;width:332px;height:150px;background:#343434"></div>
<div class="a" style="left:1537px;top:880px;width:317px;height:1px;background:#282828"></div>
<div class="a" style="left:1562px;top:583px;width:1px;height:297px;background:#2c2c2c"></div>
<div class="a" style="left:1585px;top:583px;width:1px;height:297px;background:#2c2c2c"></div>
<svg style="left:1537px;top:583px" width="332" height="300" viewBox="1537 583 332 300"><rect x="1544" y="597" width="13" height="13" rx="3" fill="none" stroke="#484848" stroke-width="1.200"/><rect x="1568" y="597" width="13" height="13" rx="3" fill="none" stroke="#484848" stroke-width="1.200"/><rect x="1544" y="633" width="13" height="13" rx="3" fill="none" stroke="#484848" stroke-width="1.200"/><rect x="1568" y="633" width="13" height="13" rx="3" fill="none" stroke="#484848" stroke-width="1.200"/><rect x="1544" y="671" width="13" height="13" rx="3" fill="none" stroke="#484848" stroke-width="1.200"/><rect x="1568" y="671" width="13" height="13" rx="3" fill="none" stroke="#484848" stroke-width="1.200"/><path d="M1540 714 Q1550 704 1560 714 Q1550 720 1540 714 Z" fill="none" stroke="#c8c8c8" stroke-width="1.400"/><circle cx="1550" cy="713" r="3.300" fill="#c8c8c8"/><path d="M1578 707 L1569 716" stroke="#cfcfcf" stroke-width="3" stroke-linecap="round"/><path d="M1567 720 H1581" stroke="#cfcfcf" stroke-width="1.200"/><rect x="1544" y="745" width="13" height="13" rx="3" fill="none" stroke="#484848" stroke-width="1.200"/><rect x="1568" y="745" width="13" height="13" rx="3" fill="none" stroke="#484848" stroke-width="1.200"/><path d="M1540 788 Q1550 778 1560 788 Q1550 794 1540 788 Z" fill="none" stroke="#c8c8c8" stroke-width="1.400"/><circle cx="1550" cy="787" r="3.300" fill="#c8c8c8"/><rect x="1568" y="781" width="13" height="13" rx="3" fill="none" stroke="#484848" stroke-width="1.200"/><path d="M1540 826 Q1550 816 1560 826 Q1550 832 1540 826 Z" fill="none" stroke="#c8c8c8" stroke-width="1.400"/><circle cx="1550" cy="825" r="3.300" fill="#c8c8c8"/><rect x="1568" y="819" width="13" height="13" rx="3" fill="none" stroke="#484848" stroke-width="1.200"/><path d="M1650 850 h9 q2 0 2 2 v12 h-8 l-3 -3 z" fill="none" stroke="#333" stroke-width="1.300"/><path d="M1650 860 h4 v4" fill="#333" stroke="#333" stroke-width="1"/><path d="M1540 862 Q1550 852 1560 862 Q1550 868 1540 862 Z" fill="none" stroke="#c8c8c8" stroke-width="1.400"/><circle cx="1550" cy="861" r="3.300" fill="#c8c8c8"/><rect x="1568" y="855" width="13" height="13" rx="3" fill="none" stroke="#484848" stroke-width="1.200"/></svg>
<!-- video player dim gradient -->
<div class="a" style="left:0;top:872px;width:1920px;height:158px;background:linear-gradient(to bottom,rgba(0,0,0,0) 0,rgba(0,0,0,.04) 12%,rgba(0,0,0,.20) 36%,rgba(0,0,0,.365) 61%,rgba(0,0,0,.425) 76%,rgba(0,0,0,.48) 100%)"></div>
<!-- taskbar -->
<div class="a" style="left:0;top:1030px;width:1920px;height:50px;background:#0d0d0d"></div>
<div class="a" style="left:61px;top:1030px;width:359px;height:50px;background:#474747"></div>
<div class="a" style="left:109px;top:1040px;font-size:19px;line-height:30px;color:#121212;white-space:nowrap">搜索</div>
<div class="a" style="left:546px;top:1030px;width:61px;height:50px;background:#222"></div>
<div class="a" style="left:1395px;top:1041px;font-size:18px;line-height:28px;color:#727272;white-space:nowrap;font-family:'Liberation Sans','Noto Sans CJK JP',sans-serif">ニュース速報</div>
<div class="a" style="left:1760px;top:1034px;width:96px;text-align:center;font-size:14.500px;line-height:22px;color:#5e5e5e">23:00<br>2025/3/19</div>
<div class="a" style="left:1689px;top:1041px;font-size:18px;line-height:26px;color:#707070;font-weight:bold">英</div>
<div class="a" style="left:1728px;top:1046px;width:19px;height:18px;background:#5a5a5a;color:#161616;font-size:14px;line-height:18px;text-align:center;font-weight:bold">拼</div>
<div class="a" style="left:1914px;top:1030px;width:1px;height:50px;background:#3a3a3a"></div>
<svg style="left:0;top:1030px" width="1920" height="50" viewBox="0 1030 1920 50">
<!-- windows logo -->
<g fill="#5e5e5e"><path d="M20 1047.500L28.500 1046.300V1054.500H20ZM29.500 1046.200L40 1044.700V1054.500H29.500ZM20 1055.500H28.500V1063.700L20 1062.500ZM29.500 1055.500H40V1065.300L29.500 1063.800Z"/></g>
<circle cx="88" cy="1051" r="6.500" fill="none" stroke="#141414" stroke-width="1.600"/><path d="M83.500 1056L76 1064" stroke="#141414" stroke-width="1.800"/>
<!-- search highlight picture -->
<path d="M322 1080L332 1062H420V1080Z" fill="#7a6248"/><path d="M337 1052L362 1044L369 1062L345 1070Z" fill="#5f6a5c"/><path d="M339 1054L361 1047L366 1060L346 1067Z" fill="#70757a"/><path d="M358 1052L370 1040L373 1043L362 1055Z" fill="#8a6a30"/>
<path d="M383 1046Q383 1036 394 1036Q405 1036 405 1046V1068Q405 1073 394 1073Q383 1073 383 1068Z" fill="#1d4f82"/><path d="M388 1037Q388 1032 394 1032Q400 1032 400 1037" fill="none" stroke="#1a446e" stroke-width="2"/><rect x="386" y="1058" width="16" height="10" rx="2" fill="#17416b"/>
<!-- task view -->
<g stroke="#6a6a6a" stroke-width="1.400" fill="none"><rect x="441.500" y="1048.500" width="11" height="11"/><path d="M441 1045H453M441 1063H453M458.500 1044V1066"/></g><circle cx="458.500" cy="1053" r="1.600" fill="#6a6a6a"/>
<!-- explorer -->
<path d="M500 1043H509L512 1046H527V1068H500Z" fill="#8a6e22"/><path d="M500 1049H527V1068H500Z" fill="#a08028"/><rect x="505" y="1056" width="17" height="9" fill="#2a5a8a"/><rect x="508" y="1059" width="11" height="6" fill="#8a6e22"/>
<!-- clip studio -->
<rect x="561" y="1040" width="30" height="30" rx="6" fill="#6c6c6c"/><path d="M582 1050Q572 1044 567 1051Q566 1058 577 1056Q586 1054 585 1049Q580 1044 572 1047M577 1056Q573 1060 575 1065" fill="none" stroke="#161616" stroke-width="3" stroke-linecap="round"/>
<!-- edge -->
<circle cx="638" cy="1055" r="15" fill="#0f5a92"/><path d="M624 1060Q626 1044 640 1043Q652 1044 653 1055H638Q634 1058 638 1064Q630 1066 624 1060Z" fill="#1f7a62"/><path d="M628 1054Q634 1046 644 1050Q650 1054 645 1058H638Q634 1054 628 1054Z" fill="#0d0d0d" opacity=".55"/>
<!-- capcut -->
<rect x="685" y="1040" width="30" height="30" rx="7" fill="#020202"/><path d="M692 1049H706L692 1061H706M706 1049L709 1051.500M706 1061L709 1058.500M692 1049L706 1061" fill="none" stroke="#b8b8b8" stroke-width="2.200" stroke-linejoin="round" stroke-linecap="round"/>
<!-- QQ -->
<rect x="747" y="1040" width="30" height="30" rx="6" fill="#6a6a6a"/><ellipse cx="762" cy="1056" rx="8" ry="10" fill="#0c0c0c"/><ellipse cx="762" cy="1060" rx="5" ry="6" fill="#8c8c8c"/><path d="M754 1055Q762 1060 770 1055L769 1059Q762 1063 755 1059Z" fill="#8a1c1c"/><circle cx="759.500" cy="1049.500" r="1.500" fill="#aaa"/><circle cx="764.500" cy="1049.500" r="1.500" fill="#aaa"/><ellipse cx="762" cy="1053" rx="3" ry="1.300" fill="#9a6a18"/>
<!-- tourbox -->
<path d="M809 1044Q809 1040 813 1040H834Q838 1040 838 1044V1066Q824 1074 809 1066Z" fill="#1c1c1c"/><text x="823.500" y="1054" font-family="'Liberation Sans',sans-serif" font-size="10" fill="#5c5c5c" text-anchor="middle">tour</text><text x="823.500" y="1063" font-family="'Liberation Sans',sans-serif" font-size="10" fill="#5c5c5c" text-anchor="middle">box</text><ellipse cx="823.500" cy="1067" rx="12" ry="3" fill="#3c3c3c"/>
<!-- WPS -->
<path d="M871 1044H880L884 1058L888 1048L892 1058L896 1044H901L895 1067H889L886 1059L883 1067H877Z" fill="#8c2214"/>
<!-- blue app -->
<rect x="936" y="1042" width="25" height="26" rx="4" fill="#174a80"/><rect x="941" y="1049" width="8" height="10" fill="#8a7a3a"/><rect x="950" y="1052" width="7" height="7" fill="#3a78b8"/><rect x="944" y="1061" width="9" height="4" fill="#8a8a8a"/>
<!-- Ai -->
<path d="M996 1066L1006 1046L1011 1056L1015 1050L1024 1066H1018L1014 1059L1011 1064L1006 1055L1001 1066Z" fill="#4a2c82"/><circle cx="1018" cy="1043" r="2" fill="#8a3a3a"/><path d="M1003 1066L1008 1056L1013 1066Z" fill="#6a3a28"/>
<!-- running indicators -->
<g fill="#46627a"><rect x="488" y="1077" width="52" height="3"/><rect x="546" y="1077" width="61" height="3" fill="#5a7c98"/><rect x="613" y="1077" width="50" height="3"/><rect x="737" y="1077" width="50" height="3"/><rect x="799" y="1077" width="51" height="3"/><rect x="862" y="1077" width="50" height="3"/><rect x="923" y="1077" width="51" height="3"/><rect x="985" y="1077" width="52" height="3"/></g>
<rect x="430" y="1030" width="620" height="50" fill="#0d0d0d" opacity=".24"/>
<!-- news icon -->
<rect x="1364" y="1041" width="20" height="24" rx="2" fill="#1f3a6a" transform="rotate(12 1374 1053)"/><rect x="1358" y="1043" width="24" height="22" rx="2" fill="#5a2a6a" transform="rotate(-6 1370 1054)"/><rect x="1357" y="1045" width="27" height="18" rx="2" fill="#8a3038"/><path d="M1362 1054L1369 1050V1058Z" fill="#c8a0a0"/><path d="M1372 1050H1381M1372 1054H1381M1372 1058H1381" stroke="#c8a0a0" stroke-width="1.600"/>
<!-- tray -->
<g fill="none" stroke="#6c6c6c" stroke-width="1.400" stroke-linecap="round" stroke-linejoin="round"><path d="M1536 1059L1543 1052L1550 1059"/><rect x="1567.500" y="1049.500" width="10" height="12" rx="2.500"/><path d="M1578 1053L1582 1051V1060L1578 1058M1570 1047H1575"/><path d="M1595 1048V1064M1595 1049H1611V1059H1597M1603 1059V1063M1599 1063.500H1608"/><path d="M1624 1052H1627L1631 1048V1062L1627 1058H1624ZM1634 1051.500Q1636.500 1055 1634 1058.500M1637 1049Q1641 1055 1637 1061"/><path d="M1674 1048L1664 1060Q1660 1064 1658 1061Q1657 1058 1662 1056L1676 1052M1663 1064L1672 1057" style="stroke-width:1.800"/><path d="M1869.500 1047.500H1888.500V1061.500H1882L1879 1065L1876 1061.500H1869.500Z" stroke="#8a8a8a"/></g>
</svg>
<!-- video controls (bright) -->
<div class="a" style="left:24px;top:967px;width:1333px;height:2px;background:#4a9de6"></div>
<div class="a" style="left:1366px;top:968px;width:530px;height:1px;background:#8c8c8c"></div>
<div class="a" style="left:1348px;top:959px;width:19px;height:19px;border:2.500px solid #4a9de6;border-radius:50%;background:rgba(150,160,175,.35)"></div>
<div class="a" style="left:24px;top:982px;font-size:12px;line-height:16px;color:#fff;letter-spacing:-.300px">2:31:01</div>
<div class="a" style="left:1836px;top:982px;width:60px;text-align:right;font-size:12px;line-height:16px;color:#fff;letter-spacing:-.300px">1:00:26</div>
<svg style="left:0;top:1008px" width="1920" height="36" viewBox="0 1008 1920 36">
<g fill="none" stroke="#fff" stroke-width="1.500" stroke-linecap="round" stroke-linejoin="round">
<path d="M39 1022H42.500L47 1018V1032L42.500 1028H39ZM50 1021.500Q52.500 1025 50 1028.500M53 1019Q57 1025 53 1031M56 1016.500Q61.500 1025 56 1033.500"/>
<path d="M90 1016.500H108V1029H97L92 1033V1029H90Z" style="stroke-width:1.600"/><path d="M93 1021H105M93 1025H105" style="stroke-width:1.300"/>
<path d="M901 1024A8.500 8.500 0 0 1 918 1024M898.500 1019.500L901 1024.500L905.500 1021.500" style="stroke-width:1.600"/>
<path d="M955.500 1017V1033M963.500 1017V1033" style="stroke-width:2"/>
<path d="M1001 1024A8.500 8.500 0 0 1 1018 1024M1020.500 1019.500L1018 1024.500L1013.500 1021.500" style="stroke-width:1.600"/>
<path d="M1712 1031L1713.500 1026L1725 1014.500Q1727 1013 1728.500 1014.500Q1730 1016 1728.500 1018L1717 1029.500Z" style="stroke-width:1.600"/>
<rect x="1761.500" y="1019" width="19" height="12" style="stroke-width:1.700"/><rect x="1771" y="1022.500" width="6.500" height="5" style="stroke-width:1.300"/>
<path d="M1830.500 1015L1823.500 1022M1823.500 1017V1022.500H1829M1811 1034L1818 1027M1818 1032V1026.500H1812.500" style="stroke-width:1.600"/>
</g>
<g fill="#fff"><circle cx="1863" cy="1025" r="1.400"/><circle cx="1870" cy="1025" r="1.400"/><circle cx="1877" cy="1025" r="1.400"/></g>
<g font-family="'Liberation Sans',sans-serif" font-size="11.500" fill="#fff" text-anchor="middle" letter-spacing="-.500"><text x="910" y="1034.500">10</text><text x="1010" y="1034.500">30</text></g>
</svg>
</body>
</html>
